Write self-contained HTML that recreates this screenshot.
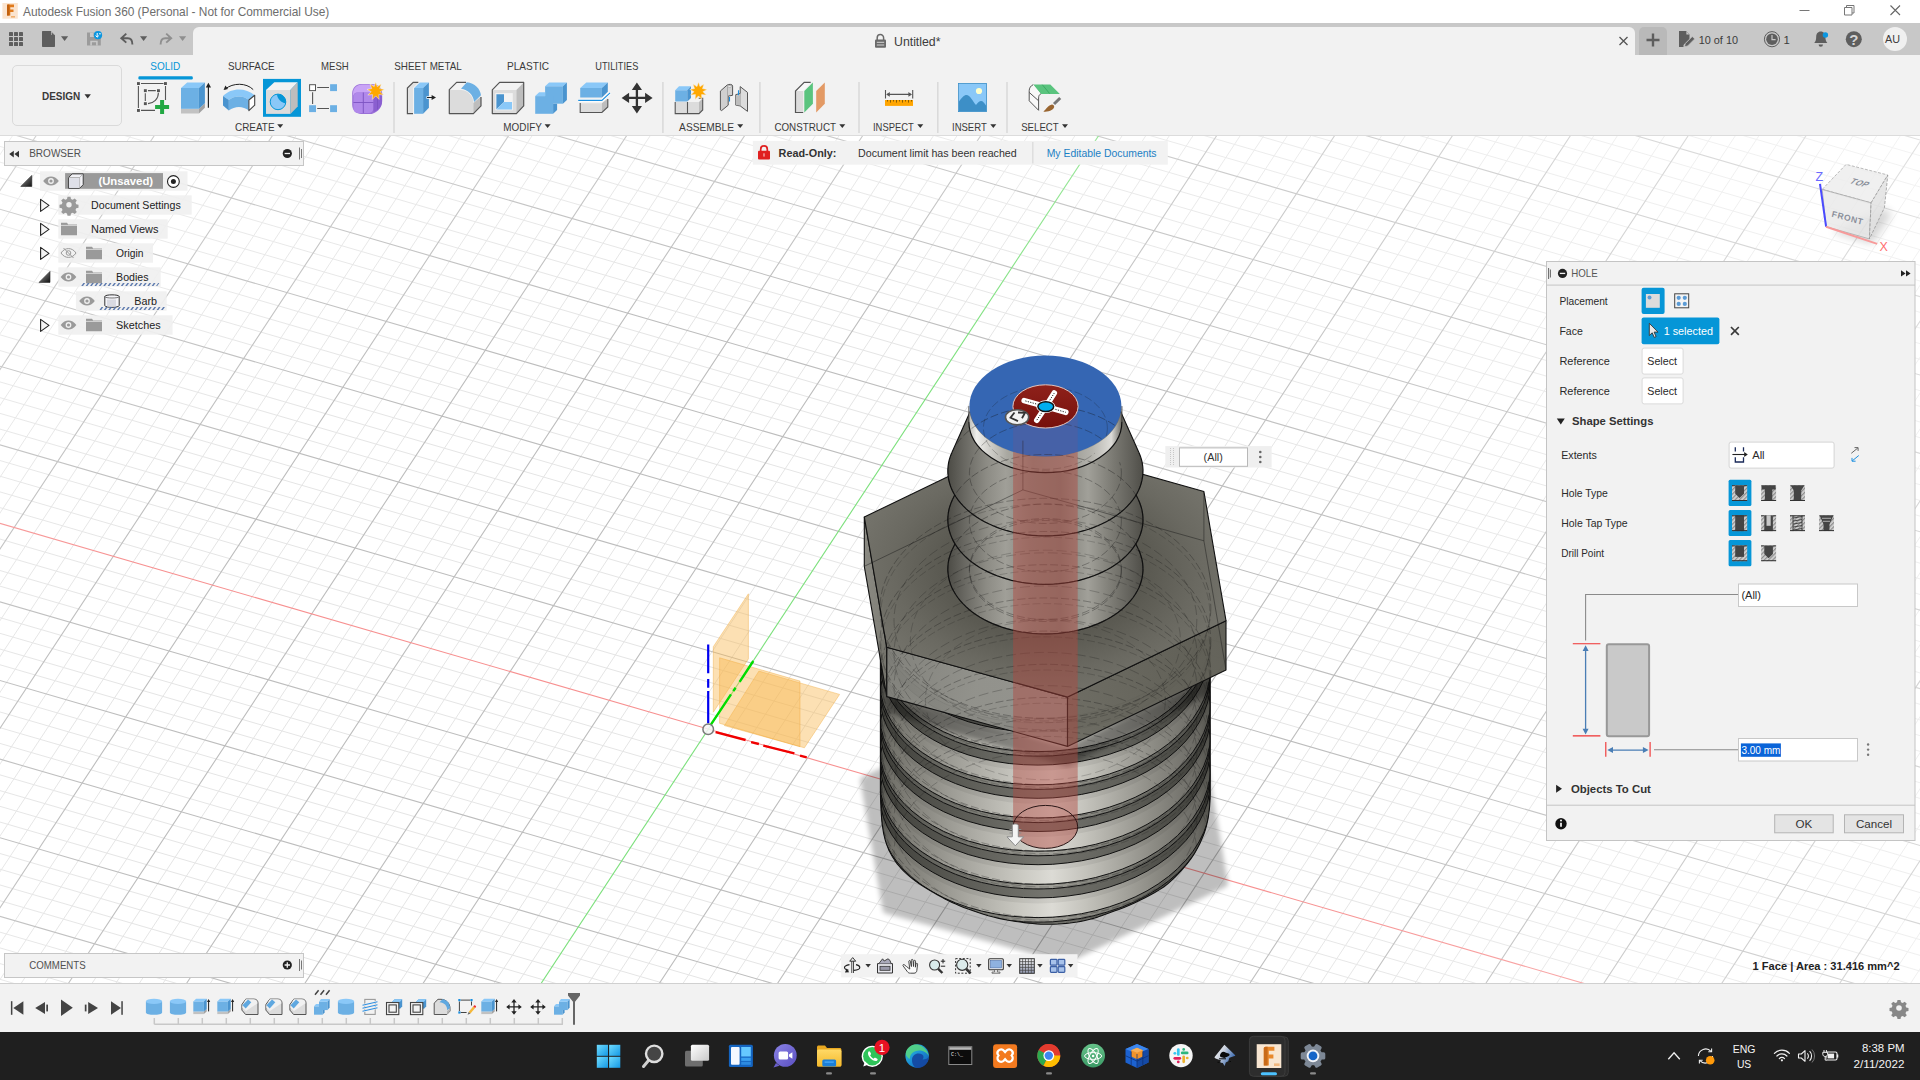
<!DOCTYPE html>
<html lang="en">
<head>
<meta charset="utf-8">
<title>Autodesk Fusion 360</title>
<style>
*{box-sizing:border-box;margin:0;padding:0}
html,body{width:1920px;height:1080px;overflow:hidden;background:#fff;font-family:"Liberation Sans",sans-serif;font-size:11px;color:#333}
.abs{position:absolute}
#titlebar{position:absolute;left:0;top:0;width:1920px;height:23px;background:#fff}
#titlebar .t{position:absolute;left:23px;top:5px;font-size:11.9px;color:#6d6d6d;white-space:nowrap;letter-spacing:-0.02px}
#tabbar{position:absolute;left:0;top:23px;width:1920px;height:32px;background:#c8c8c8}
#tab{position:absolute;left:193px;top:4px;width:1442px;height:28px;background:#f2f2f2;border-radius:6px 6px 0 0}
#toolbar{position:absolute;left:0;top:55px;width:1920px;height:81px;background:#f2f2f2;border-bottom:1px solid #dcdcdc}
#canvas{position:absolute;left:0;top:136px;width:1920px;height:847px;background:#fff;overflow:hidden}
#timeline{position:absolute;left:0;top:983px;width:1920px;height:49px;background:#f2f2f2;border-top:1px solid #d0d0d0}
#taskbar{position:absolute;left:0;top:1032px;width:1920px;height:48px;background:#1f1f1f}
.tl{position:absolute;white-space:nowrap}
svg{position:absolute;overflow:visible}
</style>
</head>
<body>
<div id="titlebar"><div class="t">Autodesk Fusion 360 (Personal - Not for Commercial Use)</div></div>
<div id="tabbar"><div id="tab"></div>
<div class="abs" style="left:1639px;top:4px;width:28px;height:28px;background:#b9b9b9;border-radius:5px 5px 0 0"></div>
<div class="abs" style="left:1883px;top:4px;width:24px;height:24px;border-radius:12px;background:#f0f0f0"></div>
</div>
<svg id="topsvg" width="1920" height="60" viewBox="0 0 1920 60" style="left:0;top:0">
<!-- app icon -->
<rect x="2.400" y="3" width="15.400" height="15.700" fill="#fbe4cf"/>
<path d="M7 5.600c0-.600.400-1 1-1h6v2.600h-3.700v2.400h3.200v2.500h-3.200v3.300h-3.300z" fill="#e07a1c"/>
<path d="M7 5.600c0-.600.400-1 1-1h1.400v10.800h-2.400z" fill="#c2610f"/>
<rect x="11" y="16" width="4" height="1.600" fill="#f0b070"/>
<!-- window controls -->
<path d="M1799.5 10.5h10" stroke="#777" stroke-width="1" fill="none"/>
<path d="M1844.5 7.5h7.5v7.5h-7.5zM1846.5 7.5v-2h7.5v7.5h-2" stroke="#777" stroke-width="1" fill="none" stroke-linejoin="round"/>
<path d="M1890.5 5.5l9.5 9.5M1900 5.5l-9.5 9.5" stroke="#666" stroke-width="1.1" fill="none"/>
<!-- QAT: grid -->
<g fill="#5e5e5e">
<rect x="9" y="32" width="4" height="4" rx=".6"/><rect x="14" y="32" width="4" height="4" rx=".6"/><rect x="19" y="32" width="4" height="4" rx=".6"/>
<rect x="9" y="37" width="4" height="4" rx=".6"/><rect x="14" y="37" width="4" height="4" rx=".6"/><rect x="19" y="37" width="4" height="4" rx=".6"/>
<rect x="9" y="42" width="4" height="4" rx=".6"/><rect x="14" y="42" width="4" height="4" rx=".6"/><rect x="19" y="42" width="4" height="4" rx=".6"/>
</g>
<!-- file -->
<path d="M42.7 31h8.2l4.1 4.2V46.2a.7.7 0 0 1-.7.7H42.7a.7.7 0 0 1-.7-.7V31.7a.7.7 0 0 1 .7-.7z" fill="#5e5e5e"/>
<path d="M51 31v4h4z" fill="#c8c8c8"/><path d="M51.6 32.3v3h3z" fill="#5e5e5e"/>
<path d="M61 36.2h7.2l-3.6 4.8z" fill="#5e5e5e"/>
<!-- save -->
<path d="M87 32.5h11.5l2.3 2.3v10.7H87z" fill="#9b9b9b"/>
<rect x="90" y="32.5" width="6.5" height="4.5" fill="#c8c8c8"/><rect x="93.5" y="33" width="2" height="3.4" fill="#9b9b9b"/>
<path d="M90.3 45.5v-4.8h7.4v4.8h-1.6v-3.2h-4.2v3.2z" fill="#c8c8c8"/>
<circle cx="98" cy="35.2" r="4.1" fill="#0b96e0"/>
<path d="M97.2 33v4M95.6 35.6l1.6 1.6 1.6-1.6M99 33.8h1.8" stroke="#fff" stroke-width="1" fill="none"/>
<!-- undo -->
<path d="M126.3 33.6l-5 4.6 5 4.4M121.8 38.2h6c3.2 0 4.6 2.6 4.6 6.4" stroke="#5e5e5e" stroke-width="1.9" fill="none" stroke-linejoin="miter"/>
<path d="M140 36.2h7.2l-3.6 4.8z" fill="#5e5e5e"/>
<!-- redo -->
<path d="M166.2 33.6l5 4.6-5 4.4M170.7 38.2h-5.5c-3.2 0-4.6 2.6-4.6 6.4" stroke="#8f8f8f" stroke-width="1.9" fill="none"/>
<path d="M179 36.2h7.2l-3.6 4.8z" fill="#8f8f8f"/>
<!-- lock + title -->
<path d="M877.2 40.2v-2.4a3.2 3.2 0 0 1 6.4 0v2.4" stroke="#6a6a6a" stroke-width="1.5" fill="none"/>
<rect x="875" y="39.6" width="11" height="8.2" rx="1" fill="#6a6a6a"/>
<path d="M876.8 42.3h7.4M876.8 45h7.4" stroke="#f2f2f2" stroke-width=".8"/>
<text x="894" y="45.6" font-size="12.3" fill="#3c3c3c">Untitled*</text>
<!-- tab close -->
<path d="M1619.5 37l8 8M1627.5 37l-8 8" stroke="#555" stroke-width="1.3" fill="none"/>
<!-- plus -->
<path d="M1653 33.5v13M1646.5 40h13" stroke="#5e5e5e" stroke-width="2.4" fill="none"/>
<!-- doc edit -->
<path d="M1679 31h7l3.5 3.5v4.5l-6 6V47h-4.5z" fill="#5e5e5e"/>
<path d="M1686.4 31.6v3h3z" fill="#c8c8c8"/>
<path d="M1692.3 36.5l2.4 2.4-7 7-3.2.9.8-3.3z" fill="#5e5e5e" stroke="#c8c8c8" stroke-width=".7"/>
<text x="1698.7" y="43.5" font-size="11.4" fill="#3c3c3c" textLength="39.3" lengthAdjust="spacingAndGlyphs">10 of 10</text>
<!-- clock -->
<circle cx="1772" cy="39.2" r="7.6" fill="none" stroke="#5e5e5e" stroke-width="1"/>
<circle cx="1772" cy="39.2" r="5.8" fill="#5e5e5e"/>
<path d="M1772 35v4.6h3.6" stroke="#c8c8c8" stroke-width="1.2" fill="none"/>
<text x="1783.4" y="43.5" font-size="11.4" fill="#3c3c3c">1</text>
<!-- bell -->
<path d="M1820.8 31.5c-3 0-4.6 2.4-4.6 5.2 0 3.4-.8 5-2 6.4h13.2c-1.2-1.4-2-3-2-6.4 0-2.8-1.6-5.2-4.6-5.2z" fill="#5e5e5e"/>
<path d="M1818.6 44.6a2.2 2.2 0 0 0 4.4 0z" fill="#5e5e5e"/>
<circle cx="1825.4" cy="35" r="2.7" fill="#0b96e0"/>
<!-- help -->
<circle cx="1853.8" cy="39.2" r="8" fill="#5e5e5e"/>
<text x="1853.8" y="44.6" font-size="15" font-weight="bold" fill="#d4d4d4" text-anchor="middle">?</text>
<text x="1892.6" y="43.2" font-size="10.8" fill="#3c3c3c" text-anchor="middle">AU</text>
</svg>
<div id="toolbar">
<div class="abs" style="left:12px;top:10px;width:110px;height:61px;border:1px solid #dadada;border-radius:5px"></div>
</div>
<svg id="tbsvg" width="1920" height="140" viewBox="0 0 1920 140" style="left:0;top:0" font-family="Liberation Sans, sans-serif">
<g font-size="10.6" fill="#3a3a3a">
<text x="42" y="100" font-weight="bold" font-size="10.4" textLength="38.3" lengthAdjust="spacingAndGlyphs">DESIGN</text>
<path d="M84.5 94.2h6.4l-3.2 4.2z" fill="#333"/>
<text x="150.3" y="70" fill="#0696d7" textLength="30" lengthAdjust="spacingAndGlyphs">SOLID</text>
<text x="228" y="70" textLength="46.7" lengthAdjust="spacingAndGlyphs">SURFACE</text>
<text x="321" y="70" textLength="27.7" lengthAdjust="spacingAndGlyphs">MESH</text>
<text x="394.3" y="70" textLength="67.4" lengthAdjust="spacingAndGlyphs">SHEET METAL</text>
<text x="507" y="70" textLength="42" lengthAdjust="spacingAndGlyphs">PLASTIC</text>
<text x="595.3" y="70" textLength="43" lengthAdjust="spacingAndGlyphs">UTILITIES</text>
<text x="235" y="130.7" textLength="39.5" lengthAdjust="spacingAndGlyphs">CREATE</text>
<text x="503.3" y="130.7" textLength="38.5" lengthAdjust="spacingAndGlyphs">MODIFY</text>
<text x="679.1" y="130.7" textLength="55" lengthAdjust="spacingAndGlyphs">ASSEMBLE</text>
<text x="774.4" y="130.7" textLength="61.6" lengthAdjust="spacingAndGlyphs">CONSTRUCT</text>
<text x="873" y="130.7" textLength="40.8" lengthAdjust="spacingAndGlyphs">INSPECT</text>
<text x="952" y="130.7" textLength="34.7" lengthAdjust="spacingAndGlyphs">INSERT</text>
<text x="1021.2" y="130.7" textLength="37.5" lengthAdjust="spacingAndGlyphs">SELECT</text>
</g>
<g fill="#333">
<path d="M277.2 124.2h6l-3 3.8z"/><path d="M544.6 124.2h6l-3 3.8z"/><path d="M737.2 124.2h6l-3 3.8z"/><path d="M839.3 124.2h6l-3 3.8z"/><path d="M917.3 124.2h6l-3 3.8z"/><path d="M990.3 124.2h6l-3 3.8z"/><path d="M1062 124.2h6l-3 3.8z"/>
</g>
<rect x="138.4" y="76.2" width="54.4" height="3.2" rx="1.2" fill="#0696d7"/>
<g stroke="#dadada" stroke-width="1.6">
<path d="M394 82v51M662.9 82v51M759.9 82v51M859 82v51M937.8 82v51M1007 82v51"/>
</g>
<!-- sketch -->
<g stroke="#555" stroke-width="1.1" fill="none">
<path d="M141 83.5h22.5M138.4 86v22M165.5 86v14M141 110.4h14"/>
<path d="M148 90.6h7.8M145.3 93.3v7.6M158.4 92.8c0 6-4.6 10.4-10.4 10.8"/>
</g>
<g fill="#555"><rect x="137" y="82.1" width="2.9" height="2.9"/><rect x="164" y="82.1" width="2.9" height="2.9"/><rect x="137" y="109" width="2.9" height="2.9"/>
<rect x="143.9" y="89.2" width="2.9" height="2.9"/><rect x="157" y="89.2" width="2.9" height="2.9"/><rect x="143.9" y="102.2" width="2.9" height="2.9"/></g>
<path d="M160.1 100h4v5h5v4h-5v5h-4v-5h-5v-4h5z" fill="#22a843"/>
<!-- extrude -->
<path d="M181 108.8h17.9v4.7H181z" fill="#c2c2c2"/><path d="M198.9 108.8l6-5.5v4.5l-6 5.7z" fill="#a2a2a2"/>
<path d="M181 88h17.9v20.8H181z" fill="#6cb0e4"/><path d="M181 88l6.2-5.6h17.7l-6 5.6z" fill="#8ac8f8"/><path d="M198.9 88l6-5.6v20.9l-6 5.5z" fill="#4a94cf"/>
<path d="M208.4 107.7V85" stroke="#222" stroke-width="1.2"/><path d="M208.4 82.8l2.6 4.6h-5.2z" fill="#222"/>
<!-- revolve -->
<path d="M253.2 89.6c-7-7-20-7-28 -.6" stroke="#222" stroke-width="1" fill="none"/><path d="M223.6 90l1.8-4.6 2.6 3.6z" fill="#222"/>
<path d="M223 96c8.500-8.500 22.500-8.500 31.700-.7l-5.800 4.700c-6-4.600-14-4.600-20.100 0z" fill="#8ac8f8"/>
<path d="M228.800 100c6.100-4.600 14.100-4.600 20.100 0v10.600c-6-4.800-14-4.800-20.100 0z" fill="#6cb0e4"/>
<path d="M223 96l5.800 4v10.600l-5.800-5.100z" fill="#4a94cf"/>
<path d="M248.900 100l5.800-4.700v9.900l-5.800 5.400z" fill="#fff" stroke="#444" stroke-width="1.1" stroke-linejoin="round"/>
<!-- hole (selected) -->
<rect x="263" y="78.900" width="38" height="37.900" fill="#0696d7"/>
<path d="M266 89.900h24.400v24H266z" fill="#dcdcdc"/><path d="M266 89.900l8.300-7.700h23.400l-7.300 7.700z" fill="#f3f3f3"/><path d="M290.400 89.900l7.300-7.700v24.400l-7.300 7.300z" fill="#bdbdbd"/>
<circle cx="278" cy="101.900" r="7.800" fill="#8ac8f8" stroke="#0696d7" stroke-width="1"/>
<path d="M277 94.200a7.800 7.800 0 0 1 8.700 9c-4.500-.6-8.400-4.200-8.700-9z" fill="#0696d7"/>
<!-- pattern -->
<path d="M317.200 87.500h11.800M317.200 108.500h11.800M312.600 92.300v11.600" stroke="#555" stroke-width="1.100"/>
<rect x="309.600" y="84.700" width="5.900" height="5.900" fill="#fff" stroke="#555" stroke-width="1"/>
<rect x="330.100" y="84.200" width="6.900" height="6.900" fill="#6cb0e4"/><rect x="309.100" y="105.200" width="6.900" height="6.900" fill="#6cb0e4"/><rect x="330.100" y="105.200" width="6.900" height="6.900" fill="#6cb0e4"/>
<!-- form -->
<path d="M361 83.900h11c6 0 10.200 4 10.200 9.500v7.500c0 7-6 13.200-13 13.200h-8c-5 0-9-4-9-9v-12c0-5 4-9.200 8.800-9.200z" fill="#9a70d8"/>
<path d="M353 93.500c0-5.500 4-9 9-9h10c3 0 5 1 6.500 2.500l-5 5.500h-16c-2.500 0-4.500 2-4.500 4.500z" fill="#c9a4f6"/>
<rect x="353.400" y="92.500" width="20" height="20.600" rx="4.500" fill="#b088ea"/>
<path d="M373.500 97l8.400-5v10c0 4-3 8-8.400 10z" fill="#8a5fd0"/>
<path d="M363.300 92.500v20.600M353.400 102.500h20M377.500 95v14.500" stroke="#7c52c2" stroke-width=".9" fill="none"/>
<path d="M375.700 82l1.500 4.600 4.100-2.500-1.600 4.500 4.700.8-4.200 2.300 3.400 3.400-4.800-.5.300 4.800-3.400-3.500-3.400 3.500.3-4.800-4.800.5 3.400-3.400-4.200-2.300 4.700-.8-1.600-4.500 4.100 2.500z" fill="#ffa800" stroke="#f3f3f3" stroke-width=".5"/>
<!-- press pull -->
<path d="M407.400 113.600V88l5.800-5.600h5.100l-5.400 5.600v25.600z" fill="#e2e2e2"/>
<path d="M413 113.600h-5.600V88l5.800-5.600h5.100" fill="none" stroke="#555" stroke-width="1.200"/>
<path d="M414.100 88h9v25.800h-9z" fill="#6cb0e4"/><path d="M414.100 88l5.700-5.600h9.100l-5.800 5.600z" fill="#8ac8f8"/><path d="M423.100 88l5.800-5.600v25.300l-5.800 6.100z" fill="#4a94cf"/>
<path d="M426.500 97.500h6" stroke="#fff" stroke-width="2.600"/><path d="M427 97.500h6" stroke="#222" stroke-width="1.100"/><path d="M431.600 95.100l4.400 2.400-4.400 2.400z" fill="#222"/>
<!-- fillet -->
<path d="M449.300 89.700l7.300-7.300h10.200l-5.800 6.400z" fill="#f3f3f3"/>
<path d="M449.300 89.900h11.300c7 0 12.800 6 12.800 13.100v10.600h-24.100z" fill="#dcdcdc"/>
<path d="M466.800 82.200c8 .8 13.600 6.600 14.200 13.100l-6.900 6.600c-.8-7-6-12.300-13.100-13.100z" fill="#6cb0e4"/>
<path d="M473.400 103l7.600-6.600v9.500l-7.600 7.700z" fill="#bdbdbd"/>
<path d="M466 82.400h-9.400l-7.300 7.300v23.900h24.100l7.600-7.700v-9" fill="none" stroke="#555" stroke-width="1.200" stroke-linejoin="round"/>
<!-- shell -->
<path d="M492.300 89.900h24.100v23.700h-24.100z" fill="#dcdcdc"/><path d="M492.300 89.900l7.300-7.500h24.100l-7.300 7.500z" fill="#f3f3f3"/><path d="M516.400 89.900l7.300-7.500v23.500l-7.300 7.700z" fill="#bdbdbd"/>
<path d="M492.300 113.600V89.900l7.300-7.500h24.100v23.500l-7.300 7.700z" fill="none" stroke="#555" stroke-width="1.200" stroke-linejoin="round"/>
<rect x="495.300" y="93.100" width="17.500" height="17.200" fill="#f3f3f3"/>
<path d="M496.400 94.200h7.600v7.700l-7.600 7.300z" fill="#4a94cf"/><path d="M496.400 109.500l7.600-7.600h8v7.600z" fill="#8ac8f8"/>
<!-- combine -->
<path d="M545.100 86.200h17.800v17.500h-17.800z" fill="#6cb0e4"/><path d="M545.100 86.200l4-3.800h17.800l-4 3.800z" fill="#8ac8f8"/><path d="M562.900 86.200l4-3.800v17.700l-4 3.600z" fill="#4a94cf"/>
<path d="M535.200 96.100h17.900v17.700h-17.900z" fill="#6cb0e4"/><path d="M535.200 96.100l4-3.900h5.900v3.900z" fill="#8ac8f8"/><path d="M553.100 103.700h4v6.200l-4 3.900z" fill="#4a94cf"/>
<!-- split body -->
<path d="M580.200 103.300h21.700v9.200h-21.700z" fill="#dcdcdc"/><path d="M601.900 103.300l5.900-4.700v8.400l-5.900 5.500z" fill="#bdbdbd"/>
<path d="M580.200 103v9.500h21.700l5.900-5.500v-8" fill="none" stroke="#555" stroke-width="1.100"/>
<path d="M580.200 88h21.700v9.500h-21.700z" fill="#6cb0e4"/><path d="M580.200 88l6.100-5.600h21.500l-5.900 5.600z" fill="#8ac8f8"/><path d="M601.900 88l5.900-5.600v9.300l-5.900 5.800z" fill="#4a94cf"/>
<path d="M578.200 100.400h23.700l8.100-7.500" fill="none" stroke="#fff" stroke-width="2.800"/><path d="M578.200 100.400h23.700l8.100-7.500" fill="none" stroke="#1b8fe0" stroke-width="1.100"/>
<!-- move -->
<path d="M636.900 88v20M627 97.900h20" stroke="#333" stroke-width="2.300"/>
<path d="M636.900 82.400l5.100 7.500h-10.200zM636.900 113.600l5.100-7.500h-10.200zM621.600 97.900l7.500-5.100v10.200zM652.600 97.900l-7.500-5.100v10.200z" fill="#333"/>
<!-- new component -->
<path d="M675.200 101.900h12.100v11.700h-12.100zM687.700 101.900h11.300v11.700h-11.300z" fill="#dcdcdc"/><path d="M687.700 101.900l3.700-3.700h11.300l-3.700 3.700z" fill="#f3f3f3"/><path d="M699 101.900l3.700-3.700v11.700l-3.700 3.700z" fill="#bdbdbd"/>
<path d="M675.200 101.900v11.700h23.800l3.700-3.700v-11.700h-4M687.500 101.900v11.700" fill="none" stroke="#555" stroke-width="1.100"/>
<path d="M675.200 90.200h12.100v11.300h-12.100z" fill="#6cb0e4"/><path d="M675.200 90.200l3.800-4h12l-3.700 4z" fill="#8ac8f8"/><path d="M687.300 90.200l3.700-4v11.700l-3.700 3.600z" fill="#4a94cf"/>
<path d="M698.500 82l1.500 4.600 4.100-2.500-1.600 4.500 4.700.8-4.200 2.300 3.400 3.400-4.800-.5.300 4.800-3.400-3.500-3.400 3.500.3-4.800-4.800.5 3.400-3.400-4.200-2.300 4.700-.8-1.600-4.500 4.100 2.500z" fill="#ffa800" stroke="#f3f3f3" stroke-width=".5"/>
<!-- joint -->
<path d="M720.400 91l6.700-5.900c1.800-1.200 5.500-1 5.500 1v9.200l-4.400.8v9.100l-6.600 5.400-1.200-.7z" fill="#d0d0d0" stroke="#555" stroke-width="1" stroke-linejoin="round"/>
<path d="M727.500 86.500v9.600" stroke="#aaa" stroke-width="1"/><ellipse cx="729.700" cy="86.400" rx="2" ry=".9" fill="#f3f3f3" stroke="#888" stroke-width=".5"/>
<path d="M740.200 86.600l7.300 5.800v19l-7.300-5.500-4.400-.7v-10.600l4.400-1.100z" fill="#dcdcdc" stroke="#555" stroke-width="1" stroke-linejoin="round"/>
<path d="M740.200 93.500v12.400" stroke="#999" stroke-width=".8"/><path d="M736 95.500h4.200v9.800H736z" fill="#bdbdbd"/>
<path d="M729.500 97.100v4.400M738.500 90.200v5.100" stroke="#1b8fe0" stroke-width="1.100"/>
<!-- construct -->
<path d="M795.500 91h7.700v21.500h-7.700z" fill="#dcdcdc"/><path d="M795.500 91l8.700-8.600h6.500l-7.500 8.600z" fill="#f8f8f8"/>
<path d="M803.200 112.500h-7.700V91l8.700-8.600h6.500" fill="none" stroke="#555" stroke-width="1.200"/>
<path d="M804.300 91l8.600-8.600v21.300l-8.600 8.800z" fill="#5ac47e"/><path d="M816.200 91l8.600-8.600v21.300l-8.600 8.800z" fill="#e39a65"/>
<!-- inspect -->
<path d="M885.500 89.900v8.700M912.700 89.900v8.700M887 94.400h24" stroke="#555" stroke-width="1.100" fill="none"/><path d="M886.200 94.400l3.600-2.400v4.800zM912 94.400l-3.600-2.400v4.800z" fill="#555"/>
<rect x="885" y="100" width="28" height="5.900" fill="#ffa500"/><path d="M887.500 100v1.500M890.500 100v2.600M893.500 100v1.500M896.500 100v2.600M899.500 100v1.500M902.500 100v2.600M905.500 100v1.500M908.500 100v2.600M911.500 100v1.500" stroke="#6b4a00" stroke-width=".8"/>
<!-- insert -->
<rect x="958.600" y="83.400" width="28" height="28.200" fill="#8ac8f8" stroke="#3d8fc7" stroke-width=".8"/>
<path d="M959 101.500c3-4 5-6.500 7.500-6.500 3.500 0 6 6 9.500 10 2-2.500 3.500-4 5-4 2 0 3.500 2 5.300 5v5.300H959z" fill="#3d8fc7"/><circle cx="979" cy="91" r="3.100" fill="#ffffcc"/>
<!-- select -->
<path d="M1033.200 84.400h17.100l9.500 9.500h-19z" fill="#5ac47e"/><path d="M1042.300 84.700l7.300 8.800" stroke="#3aa562" stroke-width=".9"/>
<path d="M1033.200 84.700c-2.500 1-4 3.500-4 6v10.100l9.400 9.500v-12.400c0-2 .8-3.400 2.200-4" fill="#f8f8f8" stroke="#555" stroke-width="1" stroke-linejoin="round"/><path d="M1029.200 92.400l9.400 8.400" stroke="#555" stroke-width="1"/>
<path d="M1054 104l6.200-6" stroke="#777" stroke-width="3"/><path d="M1043.400 111.800c3-3 5-6.500 8.500-7.200 1.500.2 2.300 1.200 2.300 2.500-1 3.500-6 4.700-10.800 4.700z" fill="#996530"/>

</svg>
<div id="canvas">
<svg id="cv" width="1920" height="847" viewBox="0 136 1920 847" style="left:0;top:0" font-family="Liberation Sans, sans-serif">
<g id="grid">
<path d="M-667.8 879.9L245.3 -503.5M-647.9 885.7L265.1 -497.7M-628.1 891.4L284.9 -492.0M-608.2 897.2L304.7 -486.2M-568.5 908.7L344.4 -474.7M-548.6 914.5L364.2 -469.0M-528.8 920.3L384.0 -463.2M-508.9 926.0L403.8 -457.4M-469.2 937.6L443.4 -445.9M-449.3 943.3L463.2 -440.2M-429.4 949.1L483.0 -434.4M-409.6 954.9L502.8 -428.6M-369.9 966.4L542.4 -417.1M-350.0 972.2L562.2 -411.4M-330.1 977.9L582.0 -405.6M-310.3 983.7L601.8 -399.9M-270.6 995.2L641.4 -388.3M-250.7 1001.0L661.2 -382.6M-230.8 1006.8L681.0 -376.8M-211.0 1012.5L700.8 -371.1M-171.3 1024.0L740.4 -359.5M-151.4 1029.8L760.2 -353.8M-131.5 1035.6L780.0 -348.0M-111.7 1041.3L799.8 -342.3M-72.0 1052.9L839.4 -330.8M-52.1 1058.6L859.2 -325.0M-32.2 1064.4L879.0 -319.3M-12.4 1070.2L898.8 -313.5M27.3 1081.7L938.4 -302.0M47.2 1087.5L958.2 -296.2M67.0 1093.2L978.0 -290.5M86.9 1099.0L997.8 -284.7M126.6 1110.5L1037.4 -273.2M146.5 1116.3L1057.2 -267.4M166.3 1122.0L1077.0 -261.7M186.2 1127.8L1096.8 -255.9M225.9 1139.3L1136.4 -244.4M245.7 1145.1L1156.2 -238.7M265.6 1150.8L1176.0 -232.9M285.4 1156.6L1195.8 -227.2M325.1 1168.1L1235.4 -215.6M345.0 1173.9L1255.2 -209.9M364.8 1179.7L1274.9 -204.1M384.7 1185.4L1294.7 -198.4M424.4 1196.9L1334.3 -186.9M444.3 1202.7L1354.1 -181.1M464.1 1208.5L1373.9 -175.4M484.0 1214.2L1393.7 -169.6M523.7 1225.8L1433.3 -158.1M543.5 1231.5L1453.1 -152.3M563.4 1237.3L1472.9 -146.6M583.2 1243.0L1492.7 -140.8M622.9 1254.6L1532.3 -129.3M642.8 1260.3L1552.0 -123.6M662.6 1266.1L1571.8 -117.8M682.5 1271.9L1591.6 -112.1M722.1 1283.4L1631.2 -100.5M742.0 1289.1L1651.0 -94.8M761.8 1294.9L1670.8 -89.0M781.7 1300.7L1690.6 -83.3M821.4 1312.2L1730.1 -71.8M841.2 1317.9L1749.9 -66.0M861.1 1323.7L1769.7 -60.3M880.9 1329.5L1789.5 -54.5M920.6 1341.0L1829.1 -43.0M940.5 1346.7L1848.9 -37.3M960.3 1352.5L1868.7 -31.5M980.2 1358.3L1888.5 -25.7M1019.8 1369.8L1928.0 -14.2M1039.7 1375.5L1947.8 -8.5M1059.5 1381.3L1967.6 -2.7M1079.4 1387.1L1987.4 3.0M1119.1 1398.6L2027.0 14.5M1138.9 1404.3L2046.7 20.3M1158.8 1410.1L2066.5 26.0M1178.6 1415.9L2086.3 31.8M1218.3 1427.4L2125.9 43.3M1238.1 1433.1L2145.7 49.0M1258.0 1438.9L2165.4 54.8M1277.8 1444.7L2185.2 60.5M1317.5 1456.2L2224.8 72.1M1337.3 1461.9L2244.6 77.8M1357.2 1467.7L2264.4 83.6M1377.0 1473.5L2284.1 89.3M1416.7 1485.0L2323.7 100.8M1436.5 1490.7L2343.5 106.6M1456.4 1496.5L2363.3 112.3M1476.2 1502.3L2383.0 118.1M1515.9 1513.8L2422.6 129.6M1535.7 1519.5L2442.4 135.3M1555.6 1525.3L2462.2 141.1M1575.4 1531.0L2482.0 146.8M1615.1 1542.6L2521.5 158.3M1634.9 1548.3L2541.3 164.1M1654.7 1554.1L2561.1 169.8M1674.6 1559.8L2580.8 175.6M-678.9 860.9L1703.1 1552.4M-670.2 847.7L1711.7 1539.2M-661.5 834.5L1720.4 1525.9M-652.8 821.3L1729.0 1512.7M-635.3 794.9L1746.3 1486.3M-626.6 781.7L1755.0 1473.1M-617.9 768.5L1763.6 1459.9M-609.2 755.3L1772.3 1446.7M-591.8 728.9L1789.6 1420.2M-583.1 715.7L1798.2 1407.0M-574.3 702.5L1806.9 1393.8M-565.6 689.3L1815.5 1380.6M-548.2 662.9L1832.8 1354.2M-539.5 649.7L1841.5 1341.0M-530.8 636.5L1850.1 1327.8M-522.1 623.3L1858.8 1314.6M-504.6 596.9L1876.0 1288.2M-495.9 583.7L1884.7 1274.9M-487.2 570.5L1893.3 1261.7M-478.5 557.3L1902.0 1248.5M-461.1 530.9L1919.3 1222.1M-452.4 517.7L1927.9 1208.9M-443.7 504.5L1936.5 1195.7M-435.0 491.3L1945.2 1182.5M-417.5 464.9L1962.5 1156.1M-408.8 451.8L1971.1 1142.9M-400.1 438.6L1979.7 1129.7M-391.4 425.4L1988.4 1116.5M-374.0 399.0L2005.7 1090.2M-365.3 385.8L2014.3 1077.0M-356.6 372.6L2022.9 1063.8M-347.9 359.5L2031.6 1050.6M-330.5 333.1L2048.8 1024.2M-321.8 319.9L2057.5 1011.0M-313.1 306.7L2066.1 997.8M-304.4 293.5L2074.8 984.6M-287.0 267.2L2092.0 958.2M-278.3 254.0L2100.7 945.1M-269.6 240.8L2109.3 931.9M-260.9 227.6L2117.9 918.7M-243.5 201.3L2135.2 892.3M-234.8 188.1L2143.8 879.1M-226.1 174.9L2152.4 865.9M-217.4 161.8L2161.1 852.8M-200.0 135.4L2178.3 826.4M-191.3 122.2L2187.0 813.2M-182.6 109.1L2195.6 800.0M-173.9 95.9L2204.2 786.9M-156.6 69.6L2221.5 760.5M-147.9 56.4L2230.1 747.3M-139.2 43.2L2238.7 734.2M-130.5 30.1L2247.3 721.0M-113.1 3.7L2264.6 694.6M-104.4 -9.4L2273.2 681.5M-95.7 -22.6L2281.8 668.3M-87.0 -35.8L2290.5 655.1M-69.6 -62.1L2307.7 628.8M-61.0 -75.3L2316.3 615.6M-52.3 -88.4L2325.0 602.4M-43.6 -101.6L2333.6 589.3M-26.2 -127.9L2350.8 562.9M-17.5 -141.1L2359.4 549.7M-8.8 -154.2L2368.1 536.6M-0.1 -167.4L2376.7 523.4M17.2 -193.7L2393.9 497.1M25.9 -206.9L2402.5 483.9M34.6 -220.0L2411.2 470.8M43.3 -233.2L2419.8 457.6M60.6 -259.5L2437.0 431.3M69.3 -272.6L2445.6 418.1M78.0 -285.8L2454.2 404.9M86.7 -298.9L2462.8 391.8M104.0 -325.2L2480.1 365.5M112.7 -338.4L2488.7 352.3M121.4 -351.5L2497.3 339.2M130.1 -364.7L2505.9 326.0M147.4 -391.0L2523.1 299.7M156.1 -404.1L2531.8 286.5M164.8 -417.3L2540.4 273.4M173.5 -430.4L2549.0 260.2M190.8 -456.7L2566.2 233.9M199.5 -469.8L2574.8 220.8M208.2 -483.0L2583.4 207.6M216.9 -496.1L2592.0 194.5" stroke="#e5e5e5" stroke-width="1" fill="none"/>
<path d="M-687.7 874.1L225.5 -509.3M-588.3 903.0L324.6 -480.5M-489.0 931.8L423.6 -451.7M-389.7 960.6L522.6 -422.9M-290.4 989.5L621.6 -394.1M-191.1 1018.3L720.6 -365.3M-91.8 1047.1L819.6 -336.5M7.5 1075.9L918.6 -307.7M106.7 1104.7L1017.6 -279.0M206.0 1133.6L1116.6 -250.2M305.3 1162.4L1215.6 -221.4M503.8 1220.0L1413.5 -163.8M603.1 1248.8L1512.5 -135.1M702.3 1277.6L1611.4 -106.3M801.5 1306.4L1710.4 -77.5M900.8 1335.2L1809.3 -48.8M1000.0 1364.0L1908.2 -20.0M1099.2 1392.8L2007.2 8.8M1198.4 1421.6L2106.1 37.5M1297.6 1450.4L2205.0 66.3M1396.8 1479.2L2303.9 95.1M1496.0 1508.0L2402.8 123.8M1595.2 1536.8L2501.7 152.6M1694.4 1565.6L2600.6 181.3M-687.7 874.1L1694.4 1565.6M-644.1 808.1L1737.7 1499.5M-600.5 742.1L1780.9 1433.4M-556.9 676.1L1824.2 1367.4M-513.3 610.1L1867.4 1301.4M-469.8 544.1L1910.6 1235.3M-426.3 478.1L1953.8 1169.3M-339.2 346.3L2040.2 1037.4M-295.7 280.4L2083.4 971.4M-252.2 214.5L2126.5 905.5M-208.7 148.6L2169.7 839.6M-165.2 82.7L2212.8 773.7M-121.8 16.9L2256.0 707.8M-78.3 -48.9L2299.1 641.9M-34.9 -114.8L2342.2 576.1M8.5 -180.5L2385.3 510.2M52.0 -246.3L2428.4 444.4M95.4 -312.1L2471.5 378.6M138.8 -377.8L2514.5 312.8M182.1 -443.6L2557.6 247.1M225.5 -509.3L2600.6 181.3" stroke="#bdbdbd" stroke-width="1.1" fill="none"/>
<path d="M-382.7 412.2L1997.0 1103.4" stroke="#f79090" stroke-width="1.1" fill="none"/>
<path d="M404.5 1191.2L1314.5 -192.6" stroke="#7be07b" stroke-width="1.1" fill="none"/>
<defs><radialGradient id="gFade" cx="707" cy="729" r="1500" gradientUnits="userSpaceOnUse" gradientTransform="translate(0,244.2) scale(1,.665)"><stop offset="0" stop-color="#fff" stop-opacity="0"/><stop offset=".4" stop-color="#fff" stop-opacity="0"/><stop offset="1" stop-color="#fff" stop-opacity=".55"/></radialGradient></defs><rect x="0" y="136" width="1920" height="847" fill="url(#gFade)"/>
</g>
<defs><linearGradient id="gThread" x1="880" x2="1211" y1="0" y2="0" gradientUnits="userSpaceOnUse">
<stop offset="0" stop-color="#55554f"/><stop offset=".04" stop-color="#74736c"/><stop offset=".2" stop-color="#9a9992"/><stop offset=".42" stop-color="#c9c8c1"/><stop offset=".52" stop-color="#dcdbd5"/><stop offset=".62" stop-color="#c4c3bc"/><stop offset=".82" stop-color="#8e8d86"/><stop offset=".96" stop-color="#6a6963"/><stop offset="1" stop-color="#4e4e48"/></linearGradient><linearGradient id="gDark" x1="880" x2="1211" y1="0" y2="0" gradientUnits="userSpaceOnUse">
<stop offset="0" stop-color="#3e3e39"/><stop offset=".25" stop-color="#5c5c56"/><stop offset=".5" stop-color="#74746e"/><stop offset=".75" stop-color="#5e5e58"/><stop offset="1" stop-color="#3c3c37"/></linearGradient><linearGradient id="gCrest" x1="880" x2="1211" y1="0" y2="0" gradientUnits="userSpaceOnUse">
<stop offset="0" stop-color="#4a4a45"/><stop offset=".3" stop-color="#7c7c75"/><stop offset=".5" stop-color="#a3a29b"/><stop offset=".7" stop-color="#7e7e77"/><stop offset="1" stop-color="#484843"/></linearGradient><linearGradient id="gBarb" x1="947" x2="1143" y1="0" y2="0" gradientUnits="userSpaceOnUse">
<stop offset="0" stop-color="#4b4a44"/><stop offset=".08" stop-color="#66655f"/><stop offset=".2" stop-color="#8c8b84"/><stop offset=".3" stop-color="#a09f98"/><stop offset=".42" stop-color="#8a8982"/><stop offset=".58" stop-color="#807f78"/><stop offset=".72" stop-color="#a1a099"/><stop offset=".85" stop-color="#7a7972"/><stop offset=".95" stop-color="#5e5d57"/><stop offset="1" stop-color="#4f4e48"/></linearGradient><filter id="fBlur" x="-20%" y="-20%" width="140%" height="140%"><feGaussianBlur stdDeviation="5"/></filter><filter id="fBlurS" x="-20%" y="-20%" width="140%" height="140%"><feGaussianBlur stdDeviation="2.6"/></filter><filter id="fBlur2" x="-20%" y="-20%" width="140%" height="140%"><feGaussianBlur stdDeviation="9"/></filter><linearGradient id="gHexL" x1="864" x2="887" y1="0" y2="0" gradientUnits="userSpaceOnUse"><stop offset="0" stop-color="#85847c"/><stop offset="1" stop-color="#77766e"/></linearGradient><linearGradient id="gHexFL" x1="887" x2="1067" y1="650" y2="720" gradientUnits="userSpaceOnUse"><stop offset="0" stop-color="#83837d"/><stop offset=".5" stop-color="#8f8f89"/><stop offset="1" stop-color="#8a8a85"/></linearGradient><linearGradient id="gHexFR" x1="1067" x2="1226" y1="720" y2="650" gradientUnits="userSpaceOnUse"><stop offset="0" stop-color="#6b6a61"/><stop offset="1" stop-color="#5f5e55"/></linearGradient><radialGradient id="gHexT" cx="1045" cy="569" r="190" gradientUnits="userSpaceOnUse" gradientTransform="translate(0,190.6) scale(1,.665)"><stop offset="0" stop-color="#4b4a43"/><stop offset=".55" stop-color="#5b5a52"/><stop offset=".8" stop-color="#6a6961"/><stop offset="1" stop-color="#73726a"/></radialGradient><linearGradient id="gCyl" x1="969" x2="1122" y1="0" y2="0" gradientUnits="userSpaceOnUse"><stop offset="0" stop-color="#bdbcb6"/><stop offset=".05" stop-color="#efefec"/><stop offset=".13" stop-color="#d2d1cc"/><stop offset=".25" stop-color="#a9a8a1"/><stop offset=".42" stop-color="#8e8d86"/><stop offset=".62" stop-color="#96958e"/><stop offset=".8" stop-color="#b4b3ad"/><stop offset=".93" stop-color="#dddcd8"/><stop offset="1" stop-color="#6a6962"/></linearGradient></defs>
<g filter="url(#fBlurS)" opacity=".25"><path d="M863.3 780L1021.9 703.6L1202.9 754.5L1225 883.7L1066.5 960.1L885.8 910.3Z" fill="#000" stroke="#000" stroke-width="6" stroke-linejoin="round"/></g>
<clipPath id="cBody"><path d="M880.4 640L880.4 790L880.4 791.2L880.4 792.7L880.5 794.6L880.5 796.8L880.6 799.3L880.7 802L880.9 805.2L881 808.9L881.2 812.8L881.5 816.9L881.8 820.8L882.2 824.4L882.7 827.7L883.2 830.8L883.7 833.8L884.4 836.7L885.1 839.5L885.9 842.2L886.8 844.9L887.8 847.4L888.8 849.9L890 852.3L891.2 854.6L892.6 857L894.1 859.3L895.6 861.6L897.2 863.8L899 866L900.9 868.2L903 870.4L905.3 872.6L907.8 874.8L910.4 877.1L913.2 879.3L916.2 881.5L919.3 883.7L922.7 886L926.3 888.2L930 890.5L933.9 892.8L937.7 895L941.5 897L945.1 898.9L948.6 900.7L952.1 902.4L955.8 904.1L959.6 905.7L963.7 907.4L968.2 909.1L973.1 910.8L978.2 912.5L983.4 914.2L988.4 915.7L993.3 917L997.9 918.1L1002.5 919.1L1006.9 920L1011.3 920.7L1015.7 921.4L1020 922L1024.3 922.6L1028.5 923.1L1032.6 923.5L1036.7 923.9L1040.9 924.2L1045 924.3L1049.2 924.3L1053.5 924.2L1057.8 924L1062 923.7L1066.1 923.4L1070 923L1073.7 922.5L1077.2 922L1080.6 921.4L1083.9 920.7L1087 920L1090 919.3L1092.6 918.6L1094.8 918L1096.8 917.4L1099 916.6L1101.5 915.7L1104.8 914.5L1108.9 913L1113.6 911.3L1118.7 909.5L1124 907.4L1129.3 905.3L1134.4 903L1139.4 900.6L1144.6 898L1149.8 895.3L1154.8 892.5L1159.6 889.6L1164 886.7L1168 883.6L1171.6 880.4L1175.1 877.1L1178.2 873.8L1181.2 870.6L1184 867.4L1186.6 864.4L1188.9 861.5L1191 858.6L1193 855.7L1194.9 852.7L1196.7 849.6L1198.5 846.3L1200.1 842.9L1201.7 839.3L1203.2 835.8L1204.5 832.3L1205.6 828.9L1206.5 825.6L1207.3 822.2L1208 818.9L1208.5 815.6L1208.9 812.5L1209.3 809.6L1209.6 806.7L1209.8 803.8L1210 801L1210.1 798.5L1210.1 796.4L1210.2 794.8L1210.2 640Z"/></clipPath>
<path d="M880.4 640L880.4 790L880.4 791.2L880.4 792.7L880.5 794.6L880.5 796.8L880.6 799.3L880.7 802L880.9 805.2L881 808.9L881.2 812.8L881.5 816.9L881.8 820.8L882.2 824.4L882.7 827.7L883.2 830.8L883.7 833.8L884.4 836.7L885.1 839.5L885.9 842.2L886.8 844.9L887.8 847.4L888.8 849.9L890 852.3L891.2 854.6L892.6 857L894.1 859.3L895.6 861.6L897.2 863.8L899 866L900.9 868.2L903 870.4L905.3 872.6L907.8 874.8L910.4 877.1L913.2 879.3L916.2 881.5L919.3 883.7L922.7 886L926.3 888.2L930 890.5L933.9 892.8L937.7 895L941.5 897L945.1 898.9L948.6 900.7L952.1 902.4L955.8 904.1L959.6 905.7L963.7 907.4L968.2 909.1L973.1 910.8L978.2 912.5L983.4 914.2L988.4 915.7L993.3 917L997.9 918.1L1002.5 919.1L1006.9 920L1011.3 920.7L1015.7 921.4L1020 922L1024.3 922.6L1028.5 923.1L1032.6 923.5L1036.7 923.9L1040.9 924.2L1045 924.3L1049.2 924.3L1053.5 924.2L1057.8 924L1062 923.7L1066.1 923.4L1070 923L1073.7 922.5L1077.2 922L1080.6 921.4L1083.9 920.7L1087 920L1090 919.3L1092.6 918.6L1094.8 918L1096.8 917.4L1099 916.6L1101.5 915.7L1104.8 914.5L1108.9 913L1113.6 911.3L1118.7 909.5L1124 907.4L1129.3 905.3L1134.4 903L1139.4 900.6L1144.6 898L1149.8 895.3L1154.8 892.5L1159.6 889.6L1164 886.7L1168 883.6L1171.6 880.4L1175.1 877.1L1178.2 873.8L1181.2 870.6L1184 867.4L1186.6 864.4L1188.9 861.5L1191 858.6L1193 855.7L1194.9 852.7L1196.7 849.6L1198.5 846.3L1200.1 842.9L1201.7 839.3L1203.2 835.8L1204.5 832.3L1205.6 828.9L1206.5 825.6L1207.3 822.2L1208 818.9L1208.5 815.6L1208.9 812.5L1209.3 809.6L1209.6 806.7L1209.8 803.8L1210 801L1210.1 798.5L1210.1 796.4L1210.2 794.8L1210.2 640Z" fill="url(#gThread)"/>
<g clip-path="url(#cBody)">
<path d="M1208.9 587.4L1210.5 597.5L1210.7 607.7L1209.7 617.8L1207.4 627.8L1203.8 637.7L1199 647.3L1193 656.7L1185.9 665.6L1177.6 674.1L1168.4 682L1158.2 689.4L1147.1 696.2L1135.2 702.3L1122.6 707.6L1109.4 712.2L1095.7 716.1L1081.6 719.1L1067.2 721.2L1052.7 722.6L1038.1 723L1023.6 722.6L1009.2 721.4L995.1 719.3L981.4 716.4L968.2 712.8L955.6 708.3L943.7 703.2L932.6 697.3L922.4 690.9L913.2 683.9L904.9 676.3L897.8 668.3L891.8 659.9L887 651.2L883.4 642.3L881.1 633.2L880.1 624L880.3 614.7L881.9 605.6L881.9 614.5L880.3 623.6L880.1 632.9L881.1 642.1L883.4 651.2L887 660.1L891.8 668.8L897.8 677.2L904.9 685.2L913.2 692.8L922.4 699.8L932.6 706.2L943.7 712.1L955.6 717.2L968.2 721.7L981.4 725.3L995.1 728.2L1009.2 730.3L1023.6 731.5L1038.1 731.9L1052.7 731.5L1067.2 730.1L1081.6 728L1095.7 725L1109.4 721.1L1122.6 716.5L1135.2 711.2L1147.1 705.1L1158.2 698.3L1168.4 690.9L1177.6 683L1185.9 674.5L1193 665.6L1199 656.2L1203.8 646.6L1207.4 636.7L1209.7 626.7L1210.7 616.6L1210.5 606.4L1208.9 596.3Z" fill="url(#gDark)"/>
<path d="M1208.9 582.8L1210.5 592.9L1210.7 603.1L1209.7 613.2L1207.4 623.2L1203.8 633.1L1199 642.7L1193 652.1L1185.9 661L1177.6 669.5L1168.4 677.4L1158.2 684.8L1147.1 691.6L1135.2 697.7L1122.6 703L1109.4 707.6L1095.7 711.5L1081.6 714.5L1067.2 716.6L1052.7 718L1038.1 718.4L1023.6 718L1009.2 716.8L995.1 714.7L981.4 711.8L968.2 708.2L955.6 703.7L943.7 698.6L932.6 692.7L922.4 686.3L913.2 679.3L904.9 671.7L897.8 663.7L891.8 655.3L887 646.6L883.4 637.7L881.1 628.6L880.1 619.4L880.3 610.1L881.9 601L881.9 605.6L880.3 614.7L880.1 624L881.1 633.2L883.4 642.3L887 651.2L891.8 659.9L897.8 668.3L904.9 676.3L913.2 683.9L922.4 690.9L932.6 697.3L943.7 703.2L955.6 708.3L968.2 712.8L981.4 716.4L995.1 719.3L1009.2 721.4L1023.6 722.6L1038.1 723L1052.7 722.6L1067.2 721.2L1081.6 719.1L1095.7 716.1L1109.4 712.2L1122.6 707.6L1135.2 702.3L1147.1 696.2L1158.2 689.4L1168.4 682L1177.6 674.1L1185.9 665.6L1193 656.7L1199 647.3L1203.8 637.7L1207.4 627.8L1209.7 617.8L1210.7 607.7L1210.5 597.5L1208.9 587.4Z" fill="url(#gCrest)"/>
<path d="M1208.9 582.8L1210.5 592.9L1210.7 603.1L1209.7 613.2L1207.4 623.2L1203.8 633.1L1199 642.7L1193 652.1L1185.9 661L1177.6 669.5L1168.4 677.4L1158.2 684.8L1147.1 691.6L1135.2 697.7L1122.6 703L1109.4 707.6L1095.7 711.5L1081.6 714.5L1067.2 716.6L1052.7 718L1038.1 718.4L1023.6 718L1009.2 716.8L995.1 714.7L981.4 711.8L968.2 708.2L955.6 703.7L943.7 698.6L932.6 692.7L922.4 686.3L913.2 679.3L904.9 671.7L897.8 663.7L891.8 655.3L887 646.6L883.4 637.7L881.1 628.6L880.1 619.4L880.3 610.1L881.9 601M1208.9 587.4L1210.5 597.5L1210.7 607.7L1209.7 617.8L1207.4 627.8L1203.8 637.7L1199 647.3L1193 656.7L1185.9 665.6L1177.6 674.1L1168.4 682L1158.2 689.4L1147.1 696.2L1135.2 702.3L1122.6 707.6L1109.4 712.2L1095.7 716.1L1081.6 719.1L1067.2 721.2L1052.7 722.6L1038.1 723L1023.6 722.6L1009.2 721.4L995.1 719.3L981.4 716.4L968.2 712.8L955.6 708.3L943.7 703.2L932.6 697.3L922.4 690.9L913.2 683.9L904.9 676.3L897.8 668.3L891.8 659.9L887 651.2L883.4 642.3L881.1 633.2L880.1 624L880.3 614.7L881.9 605.6M1208.9 596.3L1210.5 606.4L1210.7 616.6L1209.7 626.7L1207.4 636.7L1203.8 646.6L1199 656.2L1193 665.6L1185.9 674.5L1177.6 683L1168.4 690.9L1158.2 698.3L1147.1 705.1L1135.2 711.2L1122.6 716.5L1109.4 721.1L1095.7 725L1081.6 728L1067.2 730.1L1052.7 731.5L1038.1 731.9L1023.6 731.5L1009.2 730.3L995.1 728.2L981.4 725.3L968.2 721.7L955.6 717.2L943.7 712.1L932.6 706.2L922.4 699.8L913.2 692.8L904.9 685.2L897.8 677.2L891.8 668.8L887 660.1L883.4 651.2L881.1 642.1L880.1 632.9L880.3 623.6L881.9 614.5" fill="none" stroke="#111" stroke-width="1"/>
<path d="M1208.9 596.3L1210.5 606.4L1210.7 616.6L1209.7 626.7L1207.4 636.7L1203.8 646.6L1199 656.2L1193 665.6L1185.9 674.5L1177.6 683L1168.4 690.9L1158.2 698.3L1147.1 705.1L1135.2 711.2L1122.6 716.5L1109.4 721.1L1095.7 725L1081.6 728L1067.2 730.1L1052.7 731.5L1038.1 731.9L1023.6 731.5L1009.2 730.3L995.1 728.2L981.4 725.3L968.2 721.7L955.6 717.2L943.7 712.1L932.6 706.2L922.4 699.8L913.2 692.8L904.9 685.2L897.8 677.2L891.8 668.8L887 660.1L883.4 651.2L881.1 642.1L880.1 632.9L880.3 623.6L881.9 614.5L881.9 620L880.3 629.1L880.1 638.4L881.1 647.6L883.4 656.7L887 665.6L891.8 674.3L897.8 682.7L904.9 690.7L913.2 698.3L922.4 705.3L932.6 711.7L943.7 717.6L955.6 722.7L968.2 727.2L981.4 730.8L995.1 733.7L1009.2 735.8L1023.6 737L1038.1 737.4L1052.7 737L1067.2 735.6L1081.6 733.5L1095.7 730.5L1109.4 726.6L1122.6 722L1135.2 716.7L1147.1 710.6L1158.2 703.8L1168.4 696.4L1177.6 688.5L1185.9 680L1193 671.1L1199 661.7L1203.8 652.1L1207.4 642.2L1209.7 632.2L1210.7 622.1L1210.5 611.9L1208.9 601.8Z" fill="#000" opacity=".06"/>
<path d="M1208.9 620.6L1210.5 630.7L1210.7 640.9L1209.7 651L1207.4 661L1203.8 670.9L1199 680.5L1193 689.9L1185.9 698.8L1177.6 707.3L1168.4 715.2L1158.2 722.6L1147.1 729.4L1135.2 735.5L1122.6 740.8L1109.4 745.4L1095.7 749.3L1081.6 752.3L1067.2 754.4L1052.7 755.8L1038.1 756.2L1023.6 755.8L1009.2 754.6L995.1 752.5L981.4 749.6L968.2 746L955.6 741.5L943.7 736.4L932.6 730.5L922.4 724.1L913.2 717.1L904.9 709.5L897.8 701.5L891.8 693.1L887 684.4L883.4 675.5L881.1 666.4L880.1 657.2L880.3 647.9L881.9 638.8L881.9 647.7L880.3 656.8L880.1 666.1L881.1 675.3L883.4 684.4L887 693.3L891.8 702L897.8 710.4L904.9 718.4L913.2 726L922.4 733L932.6 739.4L943.7 745.3L955.6 750.4L968.2 754.9L981.4 758.5L995.1 761.4L1009.2 763.5L1023.6 764.7L1038.1 765.1L1052.7 764.7L1067.2 763.3L1081.6 761.2L1095.7 758.2L1109.4 754.3L1122.6 749.7L1135.2 744.4L1147.1 738.3L1158.2 731.5L1168.4 724.1L1177.6 716.2L1185.9 707.7L1193 698.8L1199 689.4L1203.8 679.8L1207.4 669.9L1209.7 659.9L1210.7 649.8L1210.5 639.6L1208.9 629.5Z" fill="url(#gDark)"/>
<path d="M1208.9 616L1210.5 626.1L1210.7 636.3L1209.7 646.4L1207.4 656.4L1203.8 666.3L1199 675.9L1193 685.3L1185.9 694.2L1177.6 702.7L1168.4 710.6L1158.2 718L1147.1 724.8L1135.2 730.9L1122.6 736.2L1109.4 740.8L1095.7 744.7L1081.6 747.7L1067.2 749.8L1052.7 751.2L1038.1 751.6L1023.6 751.2L1009.2 750L995.1 747.9L981.4 745L968.2 741.4L955.6 736.9L943.7 731.8L932.6 725.9L922.4 719.5L913.2 712.5L904.9 704.9L897.8 696.9L891.8 688.5L887 679.8L883.4 670.9L881.1 661.8L880.1 652.6L880.3 643.3L881.9 634.2L881.9 638.8L880.3 647.9L880.1 657.2L881.1 666.4L883.4 675.5L887 684.4L891.8 693.1L897.8 701.5L904.9 709.5L913.2 717.1L922.4 724.1L932.6 730.5L943.7 736.4L955.6 741.5L968.2 746L981.4 749.6L995.1 752.5L1009.2 754.6L1023.6 755.8L1038.1 756.2L1052.7 755.8L1067.2 754.4L1081.6 752.3L1095.7 749.3L1109.4 745.4L1122.6 740.8L1135.2 735.5L1147.1 729.4L1158.2 722.6L1168.4 715.2L1177.6 707.3L1185.9 698.8L1193 689.9L1199 680.5L1203.8 670.9L1207.4 661L1209.7 651L1210.7 640.9L1210.5 630.7L1208.9 620.6Z" fill="url(#gCrest)"/>
<path d="M1208.9 616L1210.5 626.1L1210.7 636.3L1209.7 646.4L1207.4 656.4L1203.8 666.3L1199 675.9L1193 685.3L1185.9 694.2L1177.6 702.7L1168.4 710.6L1158.2 718L1147.1 724.8L1135.2 730.9L1122.6 736.2L1109.4 740.8L1095.7 744.7L1081.6 747.7L1067.2 749.8L1052.7 751.2L1038.1 751.6L1023.6 751.2L1009.2 750L995.1 747.9L981.4 745L968.2 741.4L955.6 736.9L943.7 731.8L932.6 725.9L922.4 719.5L913.2 712.5L904.9 704.9L897.8 696.9L891.8 688.5L887 679.8L883.4 670.9L881.1 661.8L880.1 652.6L880.3 643.3L881.9 634.2M1208.9 620.6L1210.5 630.7L1210.7 640.9L1209.7 651L1207.4 661L1203.8 670.9L1199 680.5L1193 689.9L1185.9 698.8L1177.6 707.3L1168.4 715.2L1158.2 722.6L1147.1 729.4L1135.2 735.5L1122.6 740.8L1109.4 745.4L1095.7 749.3L1081.6 752.3L1067.2 754.4L1052.7 755.8L1038.1 756.2L1023.6 755.8L1009.2 754.6L995.1 752.5L981.4 749.6L968.2 746L955.6 741.5L943.7 736.4L932.6 730.5L922.4 724.1L913.2 717.1L904.9 709.5L897.8 701.5L891.8 693.1L887 684.4L883.4 675.5L881.1 666.4L880.1 657.2L880.3 647.9L881.9 638.8M1208.9 629.5L1210.5 639.6L1210.7 649.8L1209.7 659.9L1207.4 669.9L1203.8 679.8L1199 689.4L1193 698.8L1185.9 707.7L1177.6 716.2L1168.4 724.1L1158.2 731.5L1147.1 738.3L1135.2 744.4L1122.6 749.7L1109.4 754.3L1095.7 758.2L1081.6 761.2L1067.2 763.3L1052.7 764.7L1038.1 765.1L1023.6 764.7L1009.2 763.5L995.1 761.4L981.4 758.5L968.2 754.9L955.6 750.4L943.7 745.3L932.6 739.4L922.4 733L913.2 726L904.9 718.4L897.8 710.4L891.8 702L887 693.3L883.4 684.4L881.1 675.3L880.1 666.1L880.3 656.8L881.9 647.7" fill="none" stroke="#111" stroke-width="1"/>
<path d="M1208.9 629.5L1210.5 639.6L1210.7 649.8L1209.7 659.9L1207.4 669.9L1203.8 679.8L1199 689.4L1193 698.8L1185.9 707.7L1177.6 716.2L1168.4 724.1L1158.2 731.5L1147.1 738.3L1135.2 744.4L1122.6 749.7L1109.4 754.3L1095.7 758.2L1081.6 761.2L1067.2 763.3L1052.7 764.7L1038.1 765.1L1023.6 764.7L1009.2 763.5L995.1 761.4L981.4 758.5L968.2 754.9L955.6 750.4L943.7 745.3L932.6 739.4L922.4 733L913.2 726L904.9 718.4L897.8 710.4L891.8 702L887 693.3L883.4 684.4L881.1 675.3L880.1 666.1L880.3 656.8L881.9 647.7L881.9 653.2L880.3 662.3L880.1 671.6L881.1 680.8L883.4 689.9L887 698.8L891.8 707.5L897.8 715.9L904.9 723.9L913.2 731.5L922.4 738.5L932.6 744.9L943.7 750.8L955.6 755.9L968.2 760.4L981.4 764L995.1 766.9L1009.2 769L1023.6 770.2L1038.1 770.6L1052.7 770.2L1067.2 768.8L1081.6 766.7L1095.7 763.7L1109.4 759.8L1122.6 755.2L1135.2 749.9L1147.1 743.8L1158.2 737L1168.4 729.6L1177.6 721.7L1185.9 713.2L1193 704.3L1199 694.9L1203.8 685.3L1207.4 675.4L1209.7 665.4L1210.7 655.3L1210.5 645.1L1208.9 635Z" fill="#000" opacity=".06"/>
<path d="M1208.9 653.8L1210.5 663.9L1210.7 674.1L1209.7 684.2L1207.4 694.2L1203.8 704.1L1199 713.7L1193 723.1L1185.9 732L1177.6 740.5L1168.4 748.4L1158.2 755.8L1147.1 762.6L1135.2 768.7L1122.6 774L1109.4 778.6L1095.7 782.5L1081.6 785.5L1067.2 787.6L1052.7 789L1038.1 789.4L1023.6 789L1009.2 787.8L995.1 785.7L981.4 782.8L968.2 779.2L955.6 774.7L943.7 769.6L932.6 763.7L922.4 757.3L913.2 750.3L904.9 742.7L897.8 734.7L891.8 726.3L887 717.6L883.4 708.7L881.1 699.6L880.1 690.4L880.3 681.1L881.9 672L881.9 680.9L880.3 690L880.1 699.3L881.1 708.5L883.4 717.6L887 726.5L891.8 735.2L897.8 743.6L904.9 751.6L913.2 759.2L922.4 766.2L932.6 772.6L943.7 778.5L955.6 783.6L968.2 788.1L981.4 791.7L995.1 794.6L1009.2 796.7L1023.6 797.9L1038.1 798.3L1052.7 797.9L1067.2 796.5L1081.6 794.4L1095.7 791.4L1109.4 787.5L1122.6 782.9L1135.2 777.6L1147.1 771.5L1158.2 764.7L1168.4 757.3L1177.6 749.4L1185.9 740.9L1193 732L1199 722.6L1203.8 713L1207.4 703.1L1209.7 693.1L1210.7 683L1210.5 672.8L1208.9 662.7Z" fill="url(#gDark)"/>
<path d="M1208.9 649.2L1210.5 659.3L1210.7 669.5L1209.7 679.6L1207.4 689.6L1203.8 699.5L1199 709.1L1193 718.5L1185.9 727.4L1177.6 735.9L1168.4 743.8L1158.2 751.2L1147.1 758L1135.2 764.1L1122.6 769.4L1109.4 774L1095.7 777.9L1081.6 780.9L1067.2 783L1052.7 784.4L1038.1 784.8L1023.6 784.4L1009.2 783.2L995.1 781.1L981.4 778.2L968.2 774.6L955.6 770.1L943.7 765L932.6 759.1L922.4 752.7L913.2 745.7L904.9 738.1L897.8 730.1L891.8 721.7L887 713L883.4 704.1L881.1 695L880.1 685.8L880.3 676.5L881.9 667.4L881.9 672L880.3 681.1L880.1 690.4L881.1 699.6L883.4 708.7L887 717.6L891.8 726.3L897.8 734.7L904.9 742.7L913.2 750.3L922.4 757.3L932.6 763.7L943.7 769.6L955.6 774.7L968.2 779.2L981.4 782.8L995.1 785.7L1009.2 787.8L1023.6 789L1038.1 789.4L1052.7 789L1067.2 787.6L1081.6 785.5L1095.7 782.5L1109.4 778.6L1122.6 774L1135.2 768.7L1147.1 762.6L1158.2 755.8L1168.4 748.4L1177.6 740.5L1185.9 732L1193 723.1L1199 713.7L1203.8 704.1L1207.4 694.2L1209.7 684.2L1210.7 674.1L1210.5 663.9L1208.9 653.8Z" fill="url(#gCrest)"/>
<path d="M1208.9 649.2L1210.5 659.3L1210.7 669.5L1209.7 679.6L1207.4 689.6L1203.8 699.5L1199 709.1L1193 718.5L1185.9 727.4L1177.6 735.9L1168.4 743.8L1158.2 751.2L1147.1 758L1135.2 764.1L1122.6 769.4L1109.4 774L1095.7 777.9L1081.6 780.9L1067.2 783L1052.7 784.4L1038.1 784.8L1023.6 784.4L1009.2 783.2L995.1 781.1L981.4 778.2L968.2 774.6L955.6 770.1L943.7 765L932.6 759.1L922.4 752.7L913.2 745.7L904.9 738.1L897.8 730.1L891.8 721.7L887 713L883.4 704.1L881.1 695L880.1 685.8L880.3 676.5L881.9 667.4M1208.9 653.8L1210.5 663.9L1210.7 674.1L1209.7 684.2L1207.4 694.2L1203.8 704.1L1199 713.7L1193 723.1L1185.9 732L1177.6 740.5L1168.4 748.4L1158.2 755.8L1147.1 762.6L1135.2 768.7L1122.6 774L1109.4 778.6L1095.7 782.5L1081.6 785.5L1067.2 787.6L1052.7 789L1038.1 789.4L1023.6 789L1009.2 787.8L995.1 785.7L981.4 782.8L968.2 779.2L955.6 774.7L943.7 769.6L932.6 763.7L922.4 757.3L913.2 750.3L904.9 742.7L897.8 734.7L891.8 726.3L887 717.6L883.4 708.7L881.1 699.6L880.1 690.4L880.3 681.1L881.9 672M1208.9 662.7L1210.5 672.8L1210.7 683L1209.7 693.1L1207.4 703.1L1203.8 713L1199 722.6L1193 732L1185.9 740.9L1177.6 749.4L1168.4 757.3L1158.2 764.7L1147.1 771.5L1135.2 777.6L1122.6 782.9L1109.4 787.5L1095.7 791.4L1081.6 794.4L1067.2 796.5L1052.7 797.9L1038.1 798.3L1023.6 797.9L1009.2 796.7L995.1 794.6L981.4 791.7L968.2 788.1L955.6 783.6L943.7 778.5L932.6 772.6L922.4 766.2L913.2 759.2L904.9 751.6L897.8 743.6L891.8 735.2L887 726.5L883.4 717.6L881.1 708.5L880.1 699.3L880.3 690L881.9 680.9" fill="none" stroke="#111" stroke-width="1"/>
<path d="M1208.9 662.7L1210.5 672.8L1210.7 683L1209.7 693.1L1207.4 703.1L1203.8 713L1199 722.6L1193 732L1185.9 740.9L1177.6 749.4L1168.4 757.3L1158.2 764.7L1147.1 771.5L1135.2 777.6L1122.6 782.9L1109.4 787.5L1095.7 791.4L1081.6 794.4L1067.2 796.5L1052.7 797.9L1038.1 798.3L1023.6 797.9L1009.2 796.7L995.1 794.6L981.4 791.7L968.2 788.1L955.6 783.6L943.7 778.5L932.6 772.6L922.4 766.2L913.2 759.2L904.9 751.6L897.8 743.6L891.8 735.2L887 726.5L883.4 717.6L881.1 708.5L880.1 699.3L880.3 690L881.9 680.9L881.9 686.4L880.3 695.5L880.1 704.8L881.1 714L883.4 723.1L887 732L891.8 740.7L897.8 749.1L904.9 757.1L913.2 764.7L922.4 771.7L932.6 778.1L943.7 784L955.6 789.1L968.2 793.6L981.4 797.2L995.1 800.1L1009.2 802.2L1023.6 803.4L1038.1 803.8L1052.7 803.4L1067.2 802L1081.6 799.9L1095.7 796.9L1109.4 793L1122.6 788.4L1135.2 783.1L1147.1 777L1158.2 770.2L1168.4 762.8L1177.6 754.9L1185.9 746.4L1193 737.5L1199 728.1L1203.8 718.5L1207.4 708.6L1209.7 698.6L1210.7 688.5L1210.5 678.3L1208.9 668.2Z" fill="#000" opacity=".06"/>
<path d="M1208.9 687L1210.5 697.1L1210.7 707.3L1209.7 717.4L1207.4 727.4L1203.8 737.3L1199 746.9L1193 756.3L1185.9 765.2L1177.6 773.7L1168.4 781.6L1158.2 789L1147.1 795.8L1135.2 801.9L1122.6 807.2L1109.4 811.8L1095.7 815.7L1081.6 818.7L1067.2 820.8L1052.7 822.2L1038.1 822.6L1023.6 822.2L1009.2 821L995.1 818.9L981.4 816L968.2 812.4L955.6 807.9L943.7 802.8L932.6 796.9L922.4 790.5L913.2 783.5L904.9 775.9L897.8 767.9L891.8 759.5L887 750.8L883.4 741.9L881.1 732.8L880.1 723.6L880.3 714.3L881.9 705.2L881.9 714.1L880.3 723.2L880.1 732.5L881.1 741.7L883.4 750.8L887 759.7L891.8 768.4L897.8 776.8L904.9 784.8L913.2 792.4L922.4 799.4L932.6 805.8L943.7 811.7L955.6 816.8L968.2 821.3L981.4 824.9L995.1 827.8L1009.2 829.9L1023.6 831.1L1038.1 831.5L1052.7 831.1L1067.2 829.7L1081.6 827.6L1095.7 824.6L1109.4 820.7L1122.6 816.1L1135.2 810.8L1147.1 804.7L1158.2 797.9L1168.4 790.5L1177.6 782.6L1185.9 774.1L1193 765.2L1199 755.8L1203.8 746.2L1207.4 736.3L1209.7 726.3L1210.7 716.2L1210.5 706L1208.9 695.9Z" fill="url(#gDark)"/>
<path d="M1208.9 682.4L1210.5 692.5L1210.7 702.7L1209.7 712.8L1207.4 722.8L1203.8 732.7L1199 742.3L1193 751.7L1185.9 760.6L1177.6 769.1L1168.4 777L1158.2 784.4L1147.1 791.2L1135.2 797.3L1122.6 802.6L1109.4 807.2L1095.7 811.1L1081.6 814.1L1067.2 816.2L1052.7 817.6L1038.1 818L1023.6 817.6L1009.2 816.4L995.1 814.3L981.4 811.4L968.2 807.8L955.6 803.3L943.7 798.2L932.6 792.3L922.4 785.9L913.2 778.9L904.9 771.3L897.8 763.3L891.8 754.9L887 746.2L883.4 737.3L881.1 728.2L880.1 719L880.3 709.7L881.9 700.6L881.9 705.2L880.3 714.3L880.1 723.6L881.1 732.8L883.4 741.9L887 750.8L891.8 759.5L897.8 767.9L904.9 775.9L913.2 783.5L922.4 790.5L932.6 796.9L943.7 802.8L955.6 807.9L968.2 812.4L981.4 816L995.1 818.9L1009.2 821L1023.6 822.2L1038.1 822.6L1052.7 822.2L1067.2 820.8L1081.6 818.7L1095.7 815.7L1109.4 811.8L1122.6 807.2L1135.2 801.9L1147.1 795.8L1158.2 789L1168.4 781.6L1177.6 773.7L1185.9 765.2L1193 756.3L1199 746.9L1203.8 737.3L1207.4 727.4L1209.7 717.4L1210.7 707.3L1210.5 697.1L1208.9 687Z" fill="url(#gCrest)"/>
<path d="M1208.9 682.4L1210.5 692.5L1210.7 702.7L1209.7 712.8L1207.4 722.8L1203.8 732.7L1199 742.3L1193 751.7L1185.9 760.6L1177.6 769.1L1168.4 777L1158.2 784.4L1147.1 791.2L1135.2 797.3L1122.6 802.6L1109.4 807.2L1095.7 811.1L1081.6 814.1L1067.2 816.2L1052.7 817.6L1038.1 818L1023.6 817.6L1009.2 816.4L995.1 814.3L981.4 811.4L968.2 807.8L955.6 803.3L943.7 798.2L932.6 792.3L922.4 785.9L913.2 778.9L904.9 771.3L897.8 763.3L891.8 754.9L887 746.2L883.4 737.3L881.1 728.2L880.1 719L880.3 709.7L881.9 700.6M1208.9 687L1210.5 697.1L1210.7 707.3L1209.7 717.4L1207.4 727.4L1203.8 737.3L1199 746.9L1193 756.3L1185.9 765.2L1177.6 773.7L1168.4 781.6L1158.2 789L1147.1 795.8L1135.2 801.9L1122.6 807.2L1109.4 811.8L1095.7 815.7L1081.6 818.7L1067.2 820.8L1052.7 822.2L1038.1 822.6L1023.6 822.2L1009.2 821L995.1 818.9L981.4 816L968.2 812.4L955.6 807.9L943.7 802.8L932.6 796.9L922.4 790.5L913.2 783.5L904.9 775.9L897.8 767.9L891.8 759.5L887 750.8L883.4 741.9L881.1 732.8L880.1 723.6L880.3 714.3L881.9 705.2M1208.9 695.9L1210.5 706L1210.7 716.2L1209.7 726.3L1207.4 736.3L1203.8 746.2L1199 755.8L1193 765.2L1185.9 774.1L1177.6 782.6L1168.4 790.5L1158.2 797.9L1147.1 804.7L1135.2 810.8L1122.6 816.1L1109.4 820.7L1095.7 824.6L1081.6 827.6L1067.2 829.7L1052.7 831.1L1038.1 831.5L1023.6 831.1L1009.2 829.9L995.1 827.8L981.4 824.9L968.2 821.3L955.6 816.8L943.7 811.7L932.6 805.8L922.4 799.4L913.2 792.4L904.9 784.8L897.8 776.8L891.8 768.4L887 759.7L883.4 750.8L881.1 741.7L880.1 732.5L880.3 723.2L881.9 714.1" fill="none" stroke="#111" stroke-width="1"/>
<path d="M1208.9 695.9L1210.5 706L1210.7 716.2L1209.7 726.3L1207.4 736.3L1203.8 746.2L1199 755.8L1193 765.2L1185.9 774.1L1177.6 782.6L1168.4 790.5L1158.2 797.9L1147.1 804.7L1135.2 810.8L1122.6 816.1L1109.4 820.7L1095.7 824.6L1081.6 827.6L1067.2 829.7L1052.7 831.1L1038.1 831.5L1023.6 831.1L1009.2 829.9L995.1 827.8L981.4 824.9L968.2 821.3L955.6 816.8L943.7 811.7L932.6 805.8L922.4 799.4L913.2 792.4L904.9 784.8L897.8 776.8L891.8 768.4L887 759.7L883.4 750.8L881.1 741.7L880.1 732.5L880.3 723.2L881.9 714.1L881.9 719.6L880.3 728.7L880.1 738L881.1 747.2L883.4 756.3L887 765.2L891.8 773.9L897.8 782.3L904.9 790.3L913.2 797.9L922.4 804.9L932.6 811.3L943.7 817.2L955.6 822.3L968.2 826.8L981.4 830.4L995.1 833.3L1009.2 835.4L1023.6 836.6L1038.1 837L1052.7 836.6L1067.2 835.2L1081.6 833.1L1095.7 830.1L1109.4 826.2L1122.6 821.6L1135.2 816.3L1147.1 810.2L1158.2 803.4L1168.4 796L1177.6 788.1L1185.9 779.6L1193 770.7L1199 761.3L1203.8 751.7L1207.4 741.8L1209.7 731.8L1210.7 721.7L1210.5 711.5L1208.9 701.4Z" fill="#000" opacity=".06"/>
<path d="M1208.9 720.2L1210.5 730.3L1210.7 740.5L1209.7 750.6L1207.4 760.6L1203.8 770.5L1199 780.1L1193 789.5L1185.9 798.4L1177.6 806.9L1168.4 814.8L1158.2 822.2L1147.1 829L1135.2 835.1L1122.6 840.4L1109.4 845L1095.7 848.9L1081.6 851.9L1067.2 854L1052.7 855.4L1038.1 855.8L1023.6 855.4L1009.2 854.2L995.1 852.1L981.4 849.2L968.2 845.6L955.6 841.1L943.7 836L932.6 830.1L922.4 823.7L913.2 816.7L904.9 809.1L897.8 801.1L891.8 792.7L887 784L883.4 775.1L881.1 766L880.1 756.8L880.3 747.5L881.9 738.4L881.9 747.3L880.3 756.4L880.1 765.7L881.1 774.9L883.4 784L887 792.9L891.8 801.6L897.8 810L904.9 818L913.2 825.6L922.4 832.6L932.6 839L943.7 844.9L955.6 850L968.2 854.5L981.4 858.1L995.1 861L1009.2 863.1L1023.6 864.3L1038.1 864.7L1052.7 864.3L1067.2 862.9L1081.6 860.8L1095.7 857.8L1109.4 853.9L1122.6 849.3L1135.2 844L1147.1 837.9L1158.2 831.1L1168.4 823.7L1177.6 815.8L1185.9 807.3L1193 798.4L1199 789L1203.8 779.4L1207.4 769.5L1209.7 759.5L1210.7 749.4L1210.5 739.2L1208.9 729.1Z" fill="url(#gDark)"/>
<path d="M1208.9 715.6L1210.5 725.7L1210.7 735.9L1209.7 746L1207.4 756L1203.8 765.9L1199 775.5L1193 784.9L1185.9 793.8L1177.6 802.3L1168.4 810.2L1158.2 817.6L1147.1 824.4L1135.2 830.5L1122.6 835.8L1109.4 840.4L1095.7 844.3L1081.6 847.3L1067.2 849.4L1052.7 850.8L1038.1 851.2L1023.6 850.8L1009.2 849.6L995.1 847.5L981.4 844.6L968.2 841L955.6 836.5L943.7 831.4L932.6 825.5L922.4 819.1L913.2 812.1L904.9 804.5L897.8 796.5L891.8 788.1L887 779.4L883.4 770.5L881.1 761.4L880.1 752.2L880.3 742.9L881.9 733.8L881.9 738.4L880.3 747.5L880.1 756.8L881.1 766L883.4 775.1L887 784L891.8 792.7L897.8 801.1L904.9 809.1L913.2 816.7L922.4 823.7L932.6 830.1L943.7 836L955.6 841.1L968.2 845.6L981.4 849.2L995.1 852.1L1009.2 854.2L1023.6 855.4L1038.1 855.8L1052.7 855.4L1067.2 854L1081.6 851.9L1095.7 848.9L1109.4 845L1122.6 840.4L1135.2 835.1L1147.1 829L1158.2 822.2L1168.4 814.8L1177.6 806.9L1185.9 798.4L1193 789.5L1199 780.1L1203.8 770.5L1207.4 760.6L1209.7 750.6L1210.7 740.5L1210.5 730.3L1208.9 720.2Z" fill="url(#gCrest)"/>
<path d="M1208.9 715.6L1210.5 725.7L1210.7 735.9L1209.7 746L1207.4 756L1203.8 765.9L1199 775.5L1193 784.9L1185.9 793.8L1177.6 802.3L1168.4 810.2L1158.2 817.6L1147.1 824.4L1135.2 830.5L1122.6 835.8L1109.4 840.4L1095.7 844.3L1081.6 847.3L1067.2 849.4L1052.7 850.8L1038.1 851.2L1023.6 850.8L1009.2 849.6L995.1 847.5L981.4 844.6L968.2 841L955.6 836.5L943.7 831.4L932.6 825.5L922.4 819.1L913.2 812.1L904.9 804.5L897.8 796.5L891.8 788.1L887 779.4L883.4 770.5L881.1 761.4L880.1 752.2L880.3 742.9L881.9 733.8M1208.9 720.2L1210.5 730.3L1210.7 740.5L1209.7 750.6L1207.4 760.6L1203.8 770.5L1199 780.1L1193 789.5L1185.9 798.4L1177.6 806.9L1168.4 814.8L1158.2 822.2L1147.1 829L1135.2 835.1L1122.6 840.4L1109.4 845L1095.7 848.9L1081.6 851.9L1067.2 854L1052.7 855.4L1038.1 855.8L1023.6 855.4L1009.2 854.2L995.1 852.1L981.4 849.2L968.2 845.6L955.6 841.1L943.7 836L932.6 830.1L922.4 823.7L913.2 816.7L904.9 809.1L897.8 801.1L891.8 792.7L887 784L883.4 775.1L881.1 766L880.1 756.8L880.3 747.5L881.9 738.4M1208.9 729.1L1210.5 739.2L1210.7 749.4L1209.7 759.5L1207.4 769.5L1203.8 779.4L1199 789L1193 798.4L1185.9 807.3L1177.6 815.8L1168.4 823.7L1158.2 831.1L1147.1 837.9L1135.2 844L1122.6 849.3L1109.4 853.9L1095.7 857.8L1081.6 860.8L1067.2 862.9L1052.7 864.3L1038.1 864.7L1023.6 864.3L1009.2 863.1L995.1 861L981.4 858.1L968.2 854.5L955.6 850L943.7 844.9L932.6 839L922.4 832.6L913.2 825.6L904.9 818L897.8 810L891.8 801.6L887 792.9L883.4 784L881.1 774.9L880.1 765.7L880.3 756.4L881.9 747.3" fill="none" stroke="#111" stroke-width="1"/>
<path d="M1208.9 729.1L1210.5 739.2L1210.7 749.4L1209.7 759.5L1207.4 769.5L1203.8 779.4L1199 789L1193 798.4L1185.9 807.3L1177.6 815.8L1168.4 823.7L1158.2 831.1L1147.1 837.9L1135.2 844L1122.6 849.3L1109.4 853.9L1095.7 857.8L1081.6 860.8L1067.2 862.9L1052.7 864.3L1038.1 864.7L1023.6 864.3L1009.2 863.1L995.1 861L981.4 858.1L968.2 854.5L955.6 850L943.7 844.9L932.6 839L922.4 832.6L913.2 825.6L904.9 818L897.8 810L891.8 801.6L887 792.9L883.4 784L881.1 774.9L880.1 765.7L880.3 756.4L881.9 747.3L881.9 752.8L880.3 761.9L880.1 771.2L881.1 780.4L883.4 789.5L887 798.4L891.8 807.1L897.8 815.5L904.9 823.5L913.2 831.1L922.4 838.1L932.6 844.5L943.7 850.4L955.6 855.5L968.2 860L981.4 863.6L995.1 866.5L1009.2 868.6L1023.6 869.8L1038.1 870.2L1052.7 869.8L1067.2 868.4L1081.6 866.3L1095.7 863.3L1109.4 859.4L1122.6 854.8L1135.2 849.5L1147.1 843.4L1158.2 836.6L1168.4 829.2L1177.6 821.3L1185.9 812.8L1193 803.9L1199 794.5L1203.8 784.9L1207.4 775L1209.7 765L1210.7 754.9L1210.5 744.7L1208.9 734.6Z" fill="#000" opacity=".06"/>
<path d="M1208.9 753.4L1210.5 763.5L1210.7 773.7L1209.7 783.8L1207.4 793.8L1203.8 803.7L1199 813.3L1193 822.7L1185.9 831.6L1177.6 840.1L1168.4 848L1158.2 855.4L1147.1 862.2L1135.2 868.3L1122.6 873.6L1109.4 878.2L1095.7 882.1L1081.6 885.1L1067.2 887.2L1052.7 888.6L1038.1 889L1023.6 888.6L1009.2 887.4L995.1 885.3L981.4 882.4L968.2 878.8L955.6 874.3L943.7 869.2L932.6 863.3L922.4 856.9L913.2 849.9L904.9 842.3L897.8 834.3L891.8 825.9L887 817.2L883.4 808.3L881.1 799.2L880.1 790L880.3 780.7L881.9 771.6L881.9 780.5L880.3 789.6L880.1 798.9L881.1 808.1L883.4 817.2L887 826.1L891.8 834.8L897.8 843.2L904.9 851.2L913.2 858.8L922.4 865.8L932.6 872.2L943.7 878.1L955.6 883.2L968.2 887.7L981.4 891.3L995.1 894.2L1009.2 896.3L1023.6 897.5L1038.1 897.9L1052.7 897.5L1067.2 896.1L1081.6 894L1095.7 891L1109.4 887.1L1122.6 882.5L1135.2 877.2L1147.1 871.1L1158.2 864.3L1168.4 856.9L1177.6 849L1185.9 840.5L1193 831.6L1199 822.2L1203.8 812.6L1207.4 802.7L1209.7 792.7L1210.7 782.6L1210.5 772.4L1208.9 762.3Z" fill="url(#gDark)"/>
<path d="M1208.9 748.8L1210.5 758.9L1210.7 769.1L1209.7 779.2L1207.4 789.2L1203.8 799.1L1199 808.7L1193 818.1L1185.9 827L1177.6 835.5L1168.4 843.4L1158.2 850.8L1147.1 857.6L1135.2 863.7L1122.6 869L1109.4 873.6L1095.7 877.5L1081.6 880.5L1067.2 882.6L1052.7 884L1038.1 884.4L1023.6 884L1009.2 882.8L995.1 880.7L981.4 877.8L968.2 874.2L955.6 869.7L943.7 864.6L932.6 858.7L922.4 852.3L913.2 845.3L904.9 837.7L897.8 829.7L891.8 821.3L887 812.6L883.4 803.7L881.1 794.6L880.1 785.4L880.3 776.1L881.9 767L881.9 771.6L880.3 780.7L880.1 790L881.1 799.2L883.4 808.3L887 817.2L891.8 825.9L897.8 834.3L904.9 842.3L913.2 849.9L922.4 856.9L932.6 863.3L943.7 869.2L955.6 874.3L968.2 878.8L981.4 882.4L995.1 885.3L1009.2 887.4L1023.6 888.6L1038.1 889L1052.7 888.6L1067.2 887.2L1081.6 885.1L1095.7 882.1L1109.4 878.2L1122.6 873.6L1135.2 868.3L1147.1 862.2L1158.2 855.4L1168.4 848L1177.6 840.1L1185.9 831.6L1193 822.7L1199 813.3L1203.8 803.7L1207.4 793.8L1209.7 783.8L1210.7 773.7L1210.5 763.5L1208.9 753.4Z" fill="url(#gCrest)"/>
<path d="M1208.9 748.8L1210.5 758.9L1210.7 769.1L1209.7 779.2L1207.4 789.2L1203.8 799.1L1199 808.7L1193 818.1L1185.9 827L1177.6 835.5L1168.4 843.4L1158.2 850.8L1147.1 857.6L1135.2 863.7L1122.6 869L1109.4 873.6L1095.7 877.5L1081.6 880.5L1067.2 882.6L1052.7 884L1038.1 884.4L1023.6 884L1009.2 882.8L995.1 880.7L981.4 877.8L968.2 874.2L955.6 869.7L943.7 864.6L932.6 858.7L922.4 852.3L913.2 845.3L904.9 837.7L897.8 829.7L891.8 821.3L887 812.6L883.4 803.7L881.1 794.6L880.1 785.4L880.3 776.1L881.9 767M1208.9 753.4L1210.5 763.5L1210.7 773.7L1209.7 783.8L1207.4 793.8L1203.8 803.7L1199 813.3L1193 822.7L1185.9 831.6L1177.6 840.1L1168.4 848L1158.2 855.4L1147.1 862.2L1135.2 868.3L1122.6 873.6L1109.4 878.2L1095.7 882.1L1081.6 885.1L1067.2 887.2L1052.7 888.6L1038.1 889L1023.6 888.6L1009.2 887.4L995.1 885.3L981.4 882.4L968.2 878.8L955.6 874.3L943.7 869.2L932.6 863.3L922.4 856.9L913.2 849.9L904.9 842.3L897.8 834.3L891.8 825.9L887 817.2L883.4 808.3L881.1 799.2L880.1 790L880.3 780.7L881.9 771.6M1208.9 762.3L1210.5 772.4L1210.7 782.6L1209.7 792.7L1207.4 802.7L1203.8 812.6L1199 822.2L1193 831.6L1185.9 840.5L1177.6 849L1168.4 856.9L1158.2 864.3L1147.1 871.1L1135.2 877.2L1122.6 882.5L1109.4 887.1L1095.7 891L1081.6 894L1067.2 896.1L1052.7 897.5L1038.1 897.9L1023.6 897.5L1009.2 896.3L995.1 894.2L981.4 891.3L968.2 887.7L955.6 883.2L943.7 878.1L932.6 872.2L922.4 865.8L913.2 858.8L904.9 851.2L897.8 843.2L891.8 834.8L887 826.1L883.4 817.2L881.1 808.1L880.1 798.9L880.3 789.6L881.9 780.5" fill="none" stroke="#111" stroke-width="1"/>
<path d="M1208.9 762.3L1210.5 772.4L1210.7 782.6L1209.7 792.7L1207.4 802.7L1203.8 812.6L1199 822.2L1193 831.6L1185.9 840.5L1177.6 849L1168.4 856.9L1158.2 864.3L1147.1 871.1L1135.2 877.2L1122.6 882.5L1109.4 887.1L1095.7 891L1081.6 894L1067.2 896.1L1052.7 897.5L1038.1 897.9L1023.6 897.5L1009.2 896.3L995.1 894.2L981.4 891.3L968.2 887.7L955.6 883.2L943.7 878.1L932.6 872.2L922.4 865.8L913.2 858.8L904.9 851.2L897.8 843.2L891.8 834.8L887 826.1L883.4 817.2L881.1 808.1L880.1 798.9L880.3 789.6L881.9 780.5L881.9 786L880.3 795.1L880.1 804.4L881.1 813.6L883.4 822.7L887 831.6L891.8 840.3L897.8 848.7L904.9 856.7L913.2 864.3L922.4 871.3L932.6 877.7L943.7 883.6L955.6 888.7L968.2 893.2L981.4 896.8L995.1 899.7L1009.2 901.8L1023.6 903L1038.1 903.4L1052.7 903L1067.2 901.6L1081.6 899.5L1095.7 896.5L1109.4 892.6L1122.6 888L1135.2 882.7L1147.1 876.6L1158.2 869.8L1168.4 862.4L1177.6 854.5L1185.9 846L1193 837.1L1199 827.7L1203.8 818.1L1207.4 808.2L1209.7 798.2L1210.7 788.1L1210.5 777.9L1208.9 767.8Z" fill="#000" opacity=".06"/>
<path d="M1208.9 786.6L1210.5 796.7L1210.7 806.9L1209.7 817L1207.4 827L1203.8 836.9L1199 846.5L1193 855.9L1185.9 864.8L1177.6 873.3L1168.4 881.2L1158.2 888.6L1147.1 895.4L1135.2 901.5L1122.6 906.8L1109.4 911.4L1095.7 915.3L1081.6 918.3L1067.2 920.4L1052.7 921.8L1038.1 922.2L1023.6 921.8L1009.2 920.6L995.1 918.5L981.4 915.6L968.2 912L955.6 907.5L943.7 902.4L932.6 896.5L922.4 890.1L913.2 883.1L904.9 875.5L897.8 867.5L891.8 859.1L887 850.4L883.4 841.5L881.1 832.4L880.1 823.2L880.3 813.9L881.9 804.8L881.9 813.7L880.3 822.8L880.1 832.1L881.1 841.3L883.4 850.4L887 859.3L891.8 868L897.8 876.4L904.9 884.4L913.2 892L922.4 899L932.6 905.4L943.7 911.3L955.6 916.4L968.2 920.9L981.4 924.5L995.1 927.4L1009.2 929.5L1023.6 930.7L1038.1 931.1L1052.7 930.7L1067.2 929.3L1081.6 927.2L1095.7 924.2L1109.4 920.3L1122.6 915.7L1135.2 910.4L1147.1 904.3L1158.2 897.5L1168.4 890.1L1177.6 882.2L1185.9 873.7L1193 864.8L1199 855.4L1203.8 845.8L1207.4 835.9L1209.7 825.9L1210.7 815.8L1210.5 805.6L1208.9 795.5Z" fill="url(#gDark)"/>
<path d="M1208.9 782L1210.5 792.1L1210.7 802.3L1209.7 812.4L1207.4 822.4L1203.8 832.3L1199 841.9L1193 851.3L1185.9 860.2L1177.6 868.7L1168.4 876.6L1158.2 884L1147.1 890.8L1135.2 896.9L1122.6 902.2L1109.4 906.8L1095.7 910.7L1081.6 913.7L1067.2 915.8L1052.7 917.2L1038.1 917.6L1023.6 917.2L1009.2 916L995.1 913.9L981.4 911L968.2 907.4L955.6 902.9L943.7 897.8L932.6 891.9L922.4 885.5L913.2 878.5L904.9 870.9L897.8 862.9L891.8 854.5L887 845.8L883.4 836.9L881.1 827.8L880.1 818.6L880.3 809.3L881.9 800.2L881.9 804.8L880.3 813.9L880.1 823.2L881.1 832.4L883.4 841.5L887 850.4L891.8 859.1L897.8 867.5L904.9 875.5L913.2 883.1L922.4 890.1L932.6 896.5L943.7 902.4L955.6 907.5L968.2 912L981.4 915.6L995.1 918.5L1009.2 920.6L1023.6 921.8L1038.1 922.2L1052.7 921.8L1067.2 920.4L1081.6 918.3L1095.7 915.3L1109.4 911.4L1122.6 906.8L1135.2 901.5L1147.1 895.4L1158.2 888.6L1168.4 881.2L1177.6 873.3L1185.9 864.8L1193 855.9L1199 846.5L1203.8 836.9L1207.4 827L1209.7 817L1210.7 806.9L1210.5 796.7L1208.9 786.6Z" fill="url(#gCrest)"/>
<path d="M1208.9 782L1210.5 792.1L1210.7 802.3L1209.7 812.4L1207.4 822.4L1203.8 832.3L1199 841.9L1193 851.3L1185.9 860.2L1177.6 868.7L1168.4 876.6L1158.2 884L1147.1 890.8L1135.2 896.9L1122.6 902.2L1109.4 906.8L1095.7 910.7L1081.6 913.7L1067.2 915.8L1052.7 917.2L1038.1 917.6L1023.6 917.2L1009.2 916L995.1 913.9L981.4 911L968.2 907.4L955.6 902.9L943.7 897.8L932.6 891.9L922.4 885.5L913.2 878.5L904.9 870.9L897.8 862.9L891.8 854.5L887 845.8L883.4 836.9L881.1 827.8L880.1 818.6L880.3 809.3L881.9 800.2M1208.9 786.6L1210.5 796.7L1210.7 806.9L1209.7 817L1207.4 827L1203.8 836.9L1199 846.5L1193 855.9L1185.9 864.8L1177.6 873.3L1168.4 881.2L1158.2 888.6L1147.1 895.4L1135.2 901.5L1122.6 906.8L1109.4 911.4L1095.7 915.3L1081.6 918.3L1067.2 920.4L1052.7 921.8L1038.1 922.2L1023.6 921.8L1009.2 920.6L995.1 918.5L981.4 915.6L968.2 912L955.6 907.5L943.7 902.4L932.6 896.5L922.4 890.1L913.2 883.1L904.9 875.5L897.8 867.5L891.8 859.1L887 850.4L883.4 841.5L881.1 832.4L880.1 823.2L880.3 813.9L881.9 804.8M1208.9 795.5L1210.5 805.6L1210.7 815.8L1209.7 825.9L1207.4 835.9L1203.8 845.8L1199 855.4L1193 864.8L1185.9 873.7L1177.6 882.2L1168.4 890.1L1158.2 897.5L1147.1 904.3L1135.2 910.4L1122.6 915.7L1109.4 920.3L1095.7 924.2L1081.6 927.2L1067.2 929.3L1052.7 930.7L1038.1 931.1L1023.6 930.7L1009.2 929.5L995.1 927.4L981.4 924.5L968.2 920.9L955.6 916.4L943.7 911.3L932.6 905.4L922.4 899L913.2 892L904.9 884.4L897.8 876.4L891.8 868L887 859.3L883.4 850.4L881.1 841.3L880.1 832.1L880.3 822.8L881.9 813.7" fill="none" stroke="#111" stroke-width="1"/>
<path d="M1208.9 795.5L1210.5 805.6L1210.7 815.8L1209.7 825.9L1207.4 835.9L1203.8 845.8L1199 855.4L1193 864.8L1185.9 873.7L1177.6 882.2L1168.4 890.1L1158.2 897.5L1147.1 904.3L1135.2 910.4L1122.6 915.7L1109.4 920.3L1095.7 924.2L1081.6 927.2L1067.2 929.3L1052.7 930.7L1038.1 931.1L1023.6 930.7L1009.2 929.5L995.1 927.4L981.4 924.5L968.2 920.9L955.6 916.4L943.7 911.3L932.6 905.4L922.4 899L913.2 892L904.9 884.4L897.8 876.4L891.8 868L887 859.3L883.4 850.4L881.1 841.3L880.1 832.1L880.3 822.8L881.9 813.7L881.9 819.2L880.3 828.3L880.1 837.6L881.1 846.8L883.4 855.9L887 864.8L891.8 873.5L897.8 881.9L904.9 889.9L913.2 897.5L922.4 904.5L932.6 910.9L943.7 916.8L955.6 921.9L968.2 926.4L981.4 930L995.1 932.9L1009.2 935L1023.6 936.2L1038.1 936.6L1052.7 936.2L1067.2 934.8L1081.6 932.7L1095.7 929.7L1109.4 925.8L1122.6 921.2L1135.2 915.9L1147.1 909.8L1158.2 903L1168.4 895.6L1177.6 887.7L1185.9 879.2L1193 870.3L1199 860.9L1203.8 851.3L1207.4 841.4L1209.7 831.4L1210.7 821.3L1210.5 811.1L1208.9 801Z" fill="#000" opacity=".06"/>
<path d="M1208.9 819.8L1210.5 829.9L1210.7 840.1L1209.7 850.2L1207.4 860.2L1203.8 870.1L1199 879.7L1193 889.1L1185.9 898L1177.6 906.5L1168.4 914.4L1158.2 921.8L1147.1 928.6L1135.2 934.7L1122.6 940L1109.4 944.6L1095.7 948.5L1081.6 951.5L1067.2 953.6L1052.7 955L1038.1 955.4L1023.6 955L1009.2 953.8L995.1 951.7L981.4 948.8L968.2 945.2L955.6 940.7L943.7 935.6L932.6 929.7L922.4 923.3L913.2 916.3L904.9 908.7L897.8 900.7L891.8 892.3L887 883.6L883.4 874.7L881.1 865.6L880.1 856.4L880.3 847.1L881.9 838L881.9 846.9L880.3 856L880.1 865.3L881.1 874.5L883.4 883.6L887 892.5L891.8 901.2L897.8 909.6L904.9 917.6L913.2 925.2L922.4 932.2L932.6 938.6L943.7 944.5L955.6 949.6L968.2 954.1L981.4 957.7L995.1 960.6L1009.2 962.7L1023.6 963.9L1038.1 964.3L1052.7 963.9L1067.2 962.5L1081.6 960.4L1095.7 957.4L1109.4 953.5L1122.6 948.9L1135.2 943.6L1147.1 937.5L1158.2 930.7L1168.4 923.3L1177.6 915.4L1185.9 906.9L1193 898L1199 888.6L1203.8 879L1207.4 869.1L1209.7 859.1L1210.7 849L1210.5 838.8L1208.9 828.7Z" fill="url(#gDark)"/>
<path d="M1208.9 815.2L1210.5 825.3L1210.7 835.5L1209.7 845.6L1207.4 855.6L1203.8 865.5L1199 875.1L1193 884.5L1185.9 893.4L1177.6 901.9L1168.4 909.8L1158.2 917.2L1147.1 924L1135.2 930.1L1122.6 935.4L1109.4 940L1095.7 943.9L1081.6 946.9L1067.2 949L1052.7 950.4L1038.1 950.8L1023.6 950.4L1009.2 949.2L995.1 947.1L981.4 944.2L968.2 940.6L955.6 936.1L943.7 931L932.6 925.1L922.4 918.7L913.2 911.7L904.9 904.1L897.8 896.1L891.8 887.7L887 879L883.4 870.1L881.1 861L880.1 851.8L880.3 842.5L881.9 833.4L881.9 838L880.3 847.1L880.1 856.4L881.1 865.6L883.4 874.7L887 883.6L891.8 892.3L897.8 900.7L904.9 908.7L913.2 916.3L922.4 923.3L932.6 929.7L943.7 935.6L955.6 940.7L968.2 945.2L981.4 948.8L995.1 951.7L1009.2 953.8L1023.6 955L1038.1 955.4L1052.7 955L1067.2 953.6L1081.6 951.5L1095.7 948.5L1109.4 944.6L1122.6 940L1135.2 934.7L1147.1 928.6L1158.2 921.8L1168.4 914.4L1177.6 906.5L1185.9 898L1193 889.1L1199 879.7L1203.8 870.1L1207.4 860.2L1209.7 850.2L1210.7 840.1L1210.5 829.9L1208.9 819.8Z" fill="url(#gCrest)"/>
<path d="M1208.9 815.2L1210.5 825.3L1210.7 835.5L1209.7 845.6L1207.4 855.6L1203.8 865.5L1199 875.1L1193 884.5L1185.9 893.4L1177.6 901.9L1168.4 909.8L1158.2 917.2L1147.1 924L1135.2 930.1L1122.6 935.4L1109.4 940L1095.7 943.9L1081.6 946.9L1067.2 949L1052.7 950.4L1038.1 950.8L1023.6 950.4L1009.2 949.2L995.1 947.1L981.4 944.2L968.2 940.6L955.6 936.1L943.7 931L932.6 925.1L922.4 918.7L913.2 911.7L904.9 904.1L897.8 896.1L891.8 887.7L887 879L883.4 870.1L881.1 861L880.1 851.8L880.3 842.5L881.9 833.4M1208.9 819.8L1210.5 829.9L1210.7 840.1L1209.7 850.2L1207.4 860.2L1203.8 870.1L1199 879.7L1193 889.1L1185.9 898L1177.6 906.5L1168.4 914.4L1158.2 921.8L1147.1 928.6L1135.2 934.7L1122.6 940L1109.4 944.6L1095.7 948.5L1081.6 951.5L1067.2 953.6L1052.7 955L1038.1 955.4L1023.6 955L1009.2 953.8L995.1 951.7L981.4 948.8L968.2 945.2L955.6 940.7L943.7 935.6L932.6 929.7L922.4 923.3L913.2 916.3L904.9 908.7L897.8 900.7L891.8 892.3L887 883.6L883.4 874.7L881.1 865.6L880.1 856.4L880.3 847.1L881.9 838M1208.9 828.7L1210.5 838.8L1210.7 849L1209.7 859.1L1207.4 869.1L1203.8 879L1199 888.6L1193 898L1185.9 906.9L1177.6 915.4L1168.4 923.3L1158.2 930.7L1147.1 937.5L1135.2 943.6L1122.6 948.9L1109.4 953.5L1095.7 957.4L1081.6 960.4L1067.2 962.5L1052.7 963.9L1038.1 964.3L1023.6 963.9L1009.2 962.7L995.1 960.6L981.4 957.7L968.2 954.1L955.6 949.6L943.7 944.5L932.6 938.6L922.4 932.2L913.2 925.2L904.9 917.6L897.8 909.6L891.8 901.2L887 892.5L883.4 883.6L881.1 874.5L880.1 865.3L880.3 856L881.9 846.9" fill="none" stroke="#111" stroke-width="1"/>
<path d="M1208.9 828.7L1210.5 838.8L1210.7 849L1209.7 859.1L1207.4 869.1L1203.8 879L1199 888.6L1193 898L1185.9 906.9L1177.6 915.4L1168.4 923.3L1158.2 930.7L1147.1 937.5L1135.2 943.6L1122.6 948.9L1109.4 953.5L1095.7 957.4L1081.6 960.4L1067.2 962.5L1052.7 963.9L1038.1 964.3L1023.6 963.9L1009.2 962.7L995.1 960.6L981.4 957.7L968.2 954.1L955.6 949.6L943.7 944.5L932.6 938.6L922.4 932.2L913.2 925.2L904.9 917.6L897.8 909.6L891.8 901.2L887 892.5L883.4 883.6L881.1 874.5L880.1 865.3L880.3 856L881.9 846.9L881.9 852.4L880.3 861.5L880.1 870.8L881.1 880L883.4 889.1L887 898L891.8 906.7L897.8 915.1L904.9 923.1L913.2 930.7L922.4 937.7L932.6 944.1L943.7 950L955.6 955.1L968.2 959.6L981.4 963.2L995.1 966.1L1009.2 968.2L1023.6 969.4L1038.1 969.8L1052.7 969.4L1067.2 968L1081.6 965.9L1095.7 962.9L1109.4 959L1122.6 954.4L1135.2 949.1L1147.1 943L1158.2 936.2L1168.4 928.8L1177.6 920.9L1185.9 912.4L1193 903.5L1199 894.1L1203.8 884.5L1207.4 874.6L1209.7 864.6L1210.7 854.5L1210.5 844.3L1208.9 834.2Z" fill="#000" opacity=".06"/>
<path d="M1208.9 853L1210.5 863.1L1210.7 873.3L1209.7 883.4L1207.4 893.4L1203.8 903.3L1199 912.9L1193 922.3L1185.9 931.2L1177.6 939.7L1168.4 947.6L1158.2 955L1147.1 961.8L1135.2 967.9L1122.6 973.2L1109.4 977.8L1095.7 981.7L1081.6 984.7L1067.2 986.8L1052.7 988.2L1038.1 988.6L1023.6 988.2L1009.2 987L995.1 984.9L981.4 982L968.2 978.4L955.6 973.9L943.7 968.8L932.6 962.9L922.4 956.5L913.2 949.5L904.9 941.9L897.8 933.9L891.8 925.5L887 916.8L883.4 907.9L881.1 898.8L880.1 889.6L880.3 880.3L881.9 871.2L881.9 880.1L880.3 889.2L880.1 898.5L881.1 907.7L883.4 916.8L887 925.7L891.8 934.4L897.8 942.8L904.9 950.8L913.2 958.4L922.4 965.4L932.6 971.8L943.7 977.7L955.6 982.8L968.2 987.3L981.4 990.9L995.1 993.8L1009.2 995.9L1023.6 997.1L1038.1 997.5L1052.7 997.1L1067.2 995.7L1081.6 993.6L1095.7 990.6L1109.4 986.7L1122.6 982.1L1135.2 976.8L1147.1 970.7L1158.2 963.9L1168.4 956.5L1177.6 948.6L1185.9 940.1L1193 931.2L1199 921.8L1203.8 912.2L1207.4 902.3L1209.7 892.3L1210.7 882.2L1210.5 872L1208.9 861.9Z" fill="url(#gDark)"/>
<path d="M1208.9 848.4L1210.5 858.5L1210.7 868.7L1209.7 878.8L1207.4 888.8L1203.8 898.7L1199 908.3L1193 917.7L1185.9 926.6L1177.6 935.1L1168.4 943L1158.2 950.4L1147.1 957.2L1135.2 963.3L1122.6 968.6L1109.4 973.2L1095.7 977.1L1081.6 980.1L1067.2 982.2L1052.7 983.6L1038.1 984L1023.6 983.6L1009.2 982.4L995.1 980.3L981.4 977.4L968.2 973.8L955.6 969.3L943.7 964.2L932.6 958.3L922.4 951.9L913.2 944.9L904.9 937.3L897.8 929.3L891.8 920.9L887 912.2L883.4 903.3L881.1 894.2L880.1 885L880.3 875.7L881.9 866.6L881.9 871.2L880.3 880.3L880.1 889.6L881.1 898.8L883.4 907.9L887 916.8L891.8 925.5L897.8 933.9L904.9 941.9L913.2 949.5L922.4 956.5L932.6 962.9L943.7 968.8L955.6 973.9L968.2 978.4L981.4 982L995.1 984.9L1009.2 987L1023.6 988.2L1038.1 988.6L1052.7 988.2L1067.2 986.8L1081.6 984.7L1095.7 981.7L1109.4 977.8L1122.6 973.2L1135.2 967.9L1147.1 961.8L1158.2 955L1168.4 947.6L1177.6 939.7L1185.9 931.2L1193 922.3L1199 912.9L1203.8 903.3L1207.4 893.4L1209.7 883.4L1210.7 873.3L1210.5 863.1L1208.9 853Z" fill="url(#gCrest)"/>
<path d="M1208.9 848.4L1210.5 858.5L1210.7 868.7L1209.7 878.8L1207.4 888.8L1203.8 898.7L1199 908.3L1193 917.7L1185.9 926.6L1177.6 935.1L1168.4 943L1158.2 950.4L1147.1 957.2L1135.2 963.3L1122.6 968.6L1109.4 973.2L1095.7 977.1L1081.6 980.1L1067.2 982.2L1052.7 983.6L1038.1 984L1023.6 983.6L1009.2 982.4L995.1 980.3L981.4 977.4L968.2 973.8L955.6 969.3L943.7 964.2L932.6 958.3L922.4 951.9L913.2 944.9L904.9 937.3L897.8 929.3L891.8 920.9L887 912.2L883.4 903.3L881.1 894.2L880.1 885L880.3 875.7L881.9 866.6M1208.9 853L1210.5 863.1L1210.7 873.3L1209.7 883.4L1207.4 893.4L1203.8 903.3L1199 912.9L1193 922.3L1185.9 931.2L1177.6 939.7L1168.4 947.6L1158.2 955L1147.1 961.8L1135.2 967.9L1122.6 973.2L1109.4 977.8L1095.7 981.7L1081.6 984.7L1067.2 986.8L1052.7 988.2L1038.1 988.6L1023.6 988.2L1009.2 987L995.1 984.9L981.4 982L968.2 978.4L955.6 973.9L943.7 968.8L932.6 962.9L922.4 956.5L913.2 949.5L904.9 941.9L897.8 933.9L891.8 925.5L887 916.8L883.4 907.9L881.1 898.8L880.1 889.6L880.3 880.3L881.9 871.2M1208.9 861.9L1210.5 872L1210.7 882.2L1209.7 892.3L1207.4 902.3L1203.8 912.2L1199 921.8L1193 931.2L1185.9 940.1L1177.6 948.6L1168.4 956.5L1158.2 963.9L1147.1 970.7L1135.2 976.8L1122.6 982.1L1109.4 986.7L1095.7 990.6L1081.6 993.6L1067.2 995.7L1052.7 997.1L1038.1 997.5L1023.6 997.1L1009.2 995.9L995.1 993.8L981.4 990.9L968.2 987.3L955.6 982.8L943.7 977.7L932.6 971.8L922.4 965.4L913.2 958.4L904.9 950.8L897.8 942.8L891.8 934.4L887 925.7L883.4 916.8L881.1 907.7L880.1 898.5L880.3 889.2L881.9 880.1" fill="none" stroke="#111" stroke-width="1"/>
<path d="M1208.9 861.9L1210.5 872L1210.7 882.2L1209.7 892.3L1207.4 902.3L1203.8 912.2L1199 921.8L1193 931.2L1185.9 940.1L1177.6 948.6L1168.4 956.5L1158.2 963.9L1147.1 970.7L1135.2 976.8L1122.6 982.1L1109.4 986.7L1095.7 990.6L1081.6 993.6L1067.2 995.7L1052.7 997.1L1038.1 997.5L1023.6 997.1L1009.2 995.9L995.1 993.8L981.4 990.9L968.2 987.3L955.6 982.8L943.7 977.7L932.6 971.8L922.4 965.4L913.2 958.4L904.9 950.8L897.8 942.8L891.8 934.4L887 925.7L883.4 916.8L881.1 907.7L880.1 898.5L880.3 889.2L881.9 880.1L881.9 885.6L880.3 894.7L880.1 904L881.1 913.2L883.4 922.3L887 931.2L891.8 939.9L897.8 948.3L904.9 956.3L913.2 963.9L922.4 970.9L932.6 977.3L943.7 983.2L955.6 988.3L968.2 992.8L981.4 996.4L995.1 999.3L1009.2 1001.4L1023.6 1002.6L1038.1 1003L1052.7 1002.6L1067.2 1001.2L1081.6 999.1L1095.7 996.1L1109.4 992.2L1122.6 987.6L1135.2 982.3L1147.1 976.2L1158.2 969.4L1168.4 962L1177.6 954.1L1185.9 945.6L1193 936.7L1199 927.3L1203.8 917.7L1207.4 907.8L1209.7 897.8L1210.7 887.7L1210.5 877.5L1208.9 867.4Z" fill="#000" opacity=".06"/>
</g>
<path d="M880.4 640L880.4 790L880.4 791.2L880.4 792.7L880.5 794.6L880.5 796.8L880.6 799.3L880.7 802L880.9 805.2L881 808.9L881.2 812.8L881.5 816.9L881.8 820.8L882.2 824.4L882.7 827.7L883.2 830.8L883.7 833.8L884.4 836.7L885.1 839.5L885.9 842.2L886.8 844.9L887.8 847.4L888.8 849.9L890 852.3L891.2 854.6L892.6 857L894.1 859.3L895.6 861.6L897.2 863.8L899 866L900.9 868.2L903 870.4L905.3 872.6L907.8 874.8L910.4 877.1L913.2 879.3L916.2 881.5L919.3 883.7L922.7 886L926.3 888.2L930 890.5L933.9 892.8L937.7 895L941.5 897L945.1 898.9L948.6 900.7L952.1 902.4L955.8 904.1L959.6 905.7L963.7 907.4L968.2 909.1L973.1 910.8L978.2 912.5L983.4 914.2L988.4 915.7L993.3 917L997.9 918.1L1002.5 919.1L1006.9 920L1011.3 920.7L1015.7 921.4L1020 922L1024.3 922.6L1028.5 923.1L1032.6 923.5L1036.7 923.9L1040.9 924.2L1045 924.3L1049.2 924.3L1053.5 924.2L1057.8 924L1062 923.7L1066.1 923.4L1070 923L1073.7 922.5L1077.2 922L1080.6 921.4L1083.9 920.7L1087 920L1090 919.3L1092.6 918.6L1094.8 918L1096.8 917.4L1099 916.6L1101.5 915.7L1104.8 914.5L1108.9 913L1113.6 911.3L1118.7 909.5L1124 907.4L1129.3 905.3L1134.4 903L1139.4 900.6L1144.6 898L1149.8 895.3L1154.8 892.5L1159.6 889.6L1164 886.7L1168 883.6L1171.6 880.4L1175.1 877.1L1178.2 873.8L1181.2 870.6L1184 867.4L1186.6 864.4L1188.9 861.5L1191 858.6L1193 855.7L1194.9 852.7L1196.7 849.6L1198.5 846.3L1200.1 842.9L1201.7 839.3L1203.2 835.8L1204.5 832.3L1205.6 828.9L1206.5 825.6L1207.3 822.2L1208 818.9L1208.5 815.6L1208.9 812.5L1209.3 809.6L1209.6 806.7L1209.8 803.8L1210 801L1210.1 798.5L1210.1 796.4L1210.2 794.8L1210.2 640Z" fill="none" stroke="#111" stroke-width="1.1"/>
<g clip-path="url(#cBody)"><path d="M864.3 566.3L886.8 696.6L1067.5 746.4L1226 670L1226 686L1067.5 766.4L886.8 712.6L864.3 582.3Z" fill="#000" opacity=".33" filter="url(#fBlurS)"/></g>
<path d="M864.3 517L886.8 647.3L886.8 696.6L864.3 566.3Z" fill="url(#gHexL)" fill-opacity="0.95" stroke="#111" stroke-width="1.1" stroke-linejoin="round"/>
<path d="M886.8 647.3L1067.5 697.1L1067.5 746.4L886.8 696.6Z" fill="url(#gHexFL)" fill-opacity="0.9" stroke="#111" stroke-width="1.1" stroke-linejoin="round"/>
<path d="M1067.5 697.1L1226 620.7L1226 670L1067.5 746.4Z" fill="url(#gHexFR)" fill-opacity="0.97" stroke="#111" stroke-width="1.1" stroke-linejoin="round"/>
<path d="M864.3 517L1022.9 440.6L1203.9 491.5L1226 620.7L1067.5 697.1L886.8 647.3Z" fill="url(#gHexT)" stroke="#111" stroke-width="1.1" stroke-linejoin="round"/>
<path d="M972.9 506.1L952.3 549.4L950.7 553.4L949.4 557.4L948.5 561.5L947.9 565.6L947.8 569.8L948.1 573.9L948.7 578L949.8 582.1L951.2 586.1L953.1 590L955.3 593.9L957.8 597.6L960.7 601.3L964 604.8L967.6 608.2L971.5 611.4L975.7 614.4L980.2 617.3L984.9 619.9L989.9 622.4L995.1 624.6L1000.6 626.7L1006.2 628.4L1011.9 630L1017.8 631.3L1023.8 632.3L1029.9 633.1L1036.1 633.6L1042.3 633.9L1048.5 633.9L1054.7 633.6L1060.9 633.1L1067 632.3L1073 631.3L1078.9 630L1084.6 628.4L1090.2 626.7L1095.7 624.6L1100.9 622.4L1105.9 619.9L1110.6 617.3L1115.1 614.4L1119.3 611.4L1123.2 608.2L1126.8 604.8L1130.1 601.3L1133 597.6L1135.5 593.9L1137.7 590L1139.6 586.1L1141 582.1L1142.1 578L1142.7 573.9L1143 569.8L1142.9 565.6L1142.3 561.5L1141.4 557.4L1140.1 553.4L1138.5 549.4L1117.9 506.1L1116.2 503.1L1114.3 500L1112.1 497.1L1109.6 494.3L1106.8 491.6L1103.7 489L1100.5 486.6L1097 484.3L1093.2 482.1L1089.3 480.1L1085.2 478.3L1080.9 476.7L1076.5 475.3L1071.9 474L1067.3 473L1062.5 472.2L1057.7 471.5L1052.8 471.1L1047.9 470.9L1042.9 470.9L1038 471.1L1033.1 471.5L1028.3 472.2L1023.5 473L1018.9 474L1014.3 475.3L1009.9 476.7L1005.6 478.3L1001.5 480.1L997.6 482.1L993.8 484.3L990.3 486.6L987.1 489L984 491.6L981.2 494.3L978.7 497.1L976.5 500L974.6 503.1L972.9 506.1Z" fill="url(#gBarb)"/>
<path d="M952.3 549.4L950.9 552.8L949.7 556.3L948.8 559.7L948.2 563.2L947.9 566.8L947.8 570.3L948.1 573.8L948.6 577.3L949.4 580.8L950.5 584.3L951.9 587.7L953.6 591L955.5 594.3L957.7 597.5L960.2 600.7L962.9 603.7L965.9 606.6L969.1 609.5L972.5 612.2L976.1 614.7L980 617.2L984 619.5L988.2 621.6L992.6 623.6L997.2 625.4L1001.8 627.1L1006.7 628.6L1011.6 629.9L1016.6 631L1021.7 632L1026.9 632.7L1032.2 633.3L1037.4 633.7L1042.7 633.9L1048.1 633.9L1053.4 633.7L1058.6 633.3L1063.9 632.7L1069.1 632L1074.2 631L1079.2 629.9L1084.1 628.6L1089 627.1L1093.6 625.4L1098.2 623.6L1102.6 621.6L1106.8 619.5L1110.8 617.2L1114.7 614.7L1118.3 612.2L1121.7 609.5L1124.9 606.6L1127.9 603.7L1130.6 600.7L1133.1 597.5L1135.3 594.3L1137.2 591L1138.9 587.7L1140.3 584.3L1141.4 580.8L1142.2 577.3L1142.7 573.8L1143 570.3L1142.9 566.8L1142.6 563.2L1142 559.7L1141.1 556.3L1139.9 552.8L1138.5 549.4" fill="none" stroke="#111" stroke-width="1.2"/>
<path d="M972.9 506.1L952.3 549.4M1117.9 506.1L1138.5 549.4" stroke="#111" stroke-width="1.1" fill="none"/>
<path d="M973.1 457.4L952.6 499.3L950.9 503.3L949.5 507.3L948.5 511.4L948 515.6L947.8 519.7L948 523.9L948.7 528L949.7 532.1L951.1 536.1L952.9 540.1L955.1 544L957.6 547.8L960.5 551.4L963.8 555L967.3 558.4L971.3 561.6L975.5 564.7L979.9 567.5L984.7 570.2L989.7 572.7L994.9 575L1000.4 577L1006 578.8L1011.8 580.3L1017.7 581.6L1023.7 582.7L1029.9 583.5L1036.1 584L1042.3 584.3L1048.5 584.3L1054.7 584L1060.9 583.5L1067.1 582.7L1073.1 581.6L1079 580.3L1084.8 578.8L1090.4 577L1095.9 575L1101.1 572.7L1106.1 570.2L1110.9 567.5L1115.3 564.7L1119.5 561.6L1123.5 558.4L1127 555L1130.3 551.4L1133.2 547.8L1135.7 544L1137.9 540.1L1139.7 536.1L1141.1 532.1L1142.1 528L1142.8 523.9L1143 519.7L1142.8 515.6L1142.3 511.4L1141.3 507.3L1139.9 503.3L1138.2 499.3L1117.7 457.4L1116 454.3L1114 451.3L1111.8 448.4L1109.3 445.6L1106.5 442.9L1103.5 440.4L1100.2 438L1096.7 435.7L1093 433.6L1089.1 431.6L1085 429.8L1080.7 428.2L1076.3 426.8L1071.8 425.6L1067.1 424.6L1062.4 423.7L1057.6 423.1L1052.7 422.7L1047.8 422.5L1043 422.5L1038.1 422.7L1033.2 423.1L1028.4 423.7L1023.7 424.6L1019 425.6L1014.5 426.8L1010.1 428.2L1005.8 429.8L1001.7 431.6L997.8 433.6L994.1 435.7L990.6 438L987.3 440.4L984.3 442.9L981.5 445.6L979 448.4L976.8 451.3L974.8 454.3L973.1 457.4Z" fill="url(#gBarb)"/>
<path d="M952.6 499.3L951.1 502.7L949.9 506.2L948.9 509.7L948.3 513.2L947.9 516.7L947.8 520.3L948 523.8L948.5 527.3L949.3 530.8L950.4 534.3L951.8 537.7L953.4 541.1L955.3 544.4L957.5 547.7L960 550.8L962.7 553.9L965.6 556.8L968.8 559.7L972.3 562.4L975.9 565L979.7 567.4L983.8 569.7L988 571.9L992.4 573.9L997 575.8L1001.7 577.4L1006.5 578.9L1011.5 580.3L1016.5 581.4L1021.6 582.4L1026.8 583.1L1032.1 583.7L1037.4 584.1L1042.7 584.3L1048.1 584.3L1053.4 584.1L1058.7 583.7L1064 583.1L1069.2 582.4L1074.3 581.4L1079.3 580.3L1084.3 578.9L1089.1 577.4L1093.8 575.8L1098.4 573.9L1102.8 571.9L1107 569.7L1111.1 567.4L1114.9 565L1118.5 562.4L1122 559.7L1125.2 556.8L1128.1 553.9L1130.8 550.8L1133.3 547.7L1135.5 544.4L1137.4 541.1L1139 537.7L1140.4 534.3L1141.5 530.8L1142.3 527.3L1142.8 523.8L1143 520.3L1142.9 516.7L1142.5 513.2L1141.9 509.7L1140.9 506.2L1139.7 502.7L1138.2 499.3" fill="none" stroke="#111" stroke-width="1.2"/>
<path d="M973.1 457.4L952.6 499.3M1117.7 457.4L1138.2 499.3" stroke="#111" stroke-width="1.1" fill="none"/>
<path d="M972.1 407.3L951.9 452.5L950.3 456.4L949.1 460.5L948.3 464.5L947.9 468.6L947.8 472.7L948.2 476.8L948.9 480.8L950.1 484.9L951.6 488.8L953.4 492.7L955.7 496.5L958.3 500.2L961.2 503.8L964.5 507.3L968.1 510.6L972 513.8L976.2 516.8L980.7 519.6L985.4 522.2L990.4 524.6L995.6 526.8L1000.9 528.8L1006.5 530.5L1012.2 532L1018.1 533.3L1024 534.3L1030.1 535.1L1036.2 535.6L1042.3 535.9L1048.5 535.9L1054.6 535.6L1060.7 535.1L1066.8 534.3L1072.7 533.3L1078.6 532L1084.3 530.5L1089.9 528.8L1095.2 526.8L1100.4 524.6L1105.4 522.2L1110.1 519.6L1114.6 516.8L1118.8 513.8L1122.7 510.6L1126.3 507.3L1129.6 503.8L1132.5 500.2L1135.1 496.5L1137.4 492.7L1139.2 488.8L1140.7 484.9L1141.9 480.8L1142.6 476.8L1143 472.7L1142.9 468.6L1142.5 464.5L1141.7 460.5L1140.5 456.4L1138.9 452.5L1118.7 407.3L1117.1 404.1L1115.2 401L1113 398L1110.5 395.1L1107.8 392.3L1104.7 389.7L1101.4 387.2L1097.9 384.8L1094.1 382.6L1090.1 380.5L1085.9 378.7L1081.6 377L1077.1 375.5L1072.5 374.2L1067.7 373.1L1062.8 372.3L1057.9 371.6L1052.9 371.2L1047.9 371L1042.9 371L1037.9 371.2L1032.9 371.6L1028 372.3L1023.1 373.1L1018.3 374.2L1013.7 375.5L1009.2 377L1004.9 378.7L1000.7 380.5L996.7 382.6L992.9 384.8L989.4 387.2L986.1 389.7L983 392.3L980.3 395.1L977.8 398L975.6 401L973.7 404.1L972.1 407.3Z" fill="url(#gBarb)"/>
<path d="M951.9 452.5L950.5 455.9L949.4 459.3L948.6 462.7L948.1 466.2L947.8 469.7L947.9 473.2L948.2 476.7L948.8 480.2L949.7 483.6L950.8 487.1L952.3 490.4L954 493.7L956 497L958.2 500.1L960.7 503.2L963.4 506.2L966.4 509.1L969.6 511.9L973 514.5L976.6 517.1L980.5 519.5L984.5 521.7L988.7 523.8L993.1 525.8L997.6 527.6L1002.2 529.2L1007 530.7L1011.9 532L1016.9 533.1L1022 534L1027.1 534.8L1032.3 535.3L1037.5 535.7L1042.8 535.9L1048 535.9L1053.3 535.7L1058.5 535.3L1063.7 534.8L1068.8 534L1073.9 533.1L1078.9 532L1083.8 530.7L1088.6 529.2L1093.2 527.6L1097.7 525.8L1102.1 523.8L1106.3 521.7L1110.3 519.5L1114.2 517.1L1117.8 514.5L1121.2 511.9L1124.4 509.1L1127.4 506.2L1130.1 503.2L1132.6 500.1L1134.8 497L1136.8 493.7L1138.5 490.4L1140 487.1L1141.1 483.6L1142 480.2L1142.6 476.7L1142.9 473.2L1143 469.7L1142.7 466.2L1142.2 462.7L1141.4 459.3L1140.3 455.9L1138.9 452.5" fill="none" stroke="#111" stroke-width="1.2"/>
<path d="M972.1 407.3L951.9 452.5M1118.7 407.3L1138.9 452.5" stroke="#111" stroke-width="1.1" fill="none"/>
<path d="M968.9 406.1L968.9 421.8L969.1 425.9L969.9 430L971.1 434L972.8 437.9L975 441.7L977.7 445.4L980.7 449L984.2 452.4L988.1 455.5L992.4 458.5L997 461.2L1001.9 463.7L1007.2 465.9L1012.6 467.8L1018.3 469.4L1024.1 470.7L1030.1 471.6L1036.2 472.3L1042.3 472.6L1048.5 472.6L1054.6 472.3L1060.7 471.6L1066.7 470.7L1072.5 469.4L1078.2 467.8L1083.7 465.9L1088.9 463.7L1093.8 461.2L1098.4 458.5L1102.7 455.5L1106.6 452.4L1110.1 449L1113.1 445.4L1115.8 441.7L1118 437.9L1119.7 434L1120.9 430L1121.7 425.9L1121.9 421.8L1121.9 406.1L1121.7 410.2L1120.9 414.3L1119.7 418.3L1118 422.2L1115.8 426L1113.1 429.7L1110.1 433.3L1106.6 436.7L1102.7 439.8L1098.4 442.8L1093.8 445.5L1088.9 448L1083.7 450.2L1078.2 452.1L1072.5 453.7L1066.7 455L1060.7 455.9L1054.6 456.6L1048.5 456.9L1042.3 456.9L1036.2 456.6L1030.1 455.9L1024.1 455L1018.3 453.7L1012.6 452.1L1007.2 450.2L1001.9 448L997 445.5L992.4 442.8L988.1 439.8L984.2 436.7L980.7 433.3L977.7 429.7L975 426L972.8 422.2L971.1 418.3L969.9 414.3L969.1 410.2L968.9 406.1Z" fill="url(#gCyl)"/>
<path d="M968.9 421.8A76.5 50.9 0 0 0 1121.9 421.8" fill="none" stroke="#111" stroke-width="1.2"/>
<path d="M968.9 406.1V421.8M1121.9 406.1V421.8" stroke="#333" stroke-width=".9" fill="none"/>
<ellipse cx="1045.4" cy="406.1" rx="76" ry="50.5" fill="#3566b3"/>
<clipPath id="cAll"><path d="M880.4 640L880.4 790L880.4 791.2L880.4 792.7L880.5 794.6L880.5 796.8L880.6 799.3L880.7 802L880.9 805.2L881 808.9L881.2 812.8L881.5 816.9L881.8 820.8L882.2 824.4L882.7 827.7L883.2 830.8L883.7 833.8L884.4 836.7L885.1 839.5L885.9 842.2L886.8 844.9L887.8 847.4L888.8 849.9L890 852.3L891.2 854.6L892.6 857L894.1 859.3L895.6 861.6L897.2 863.8L899 866L900.9 868.2L903 870.4L905.3 872.6L907.8 874.8L910.4 877.1L913.2 879.3L916.2 881.5L919.3 883.7L922.7 886L926.3 888.2L930 890.5L933.9 892.8L937.7 895L941.5 897L945.1 898.9L948.6 900.7L952.1 902.4L955.8 904.1L959.6 905.7L963.7 907.4L968.2 909.1L973.1 910.8L978.2 912.5L983.4 914.2L988.4 915.7L993.3 917L997.9 918.1L1002.5 919.1L1006.9 920L1011.3 920.7L1015.7 921.4L1020 922L1024.3 922.6L1028.5 923.1L1032.6 923.5L1036.7 923.9L1040.9 924.2L1045 924.3L1049.2 924.3L1053.5 924.2L1057.8 924L1062 923.7L1066.1 923.4L1070 923L1073.7 922.5L1077.2 922L1080.6 921.4L1083.9 920.7L1087 920L1090 919.3L1092.6 918.6L1094.8 918L1096.8 917.4L1099 916.6L1101.5 915.7L1104.8 914.5L1108.9 913L1113.6 911.3L1118.7 909.5L1124 907.4L1129.3 905.3L1134.4 903L1139.4 900.6L1144.6 898L1149.8 895.3L1154.8 892.5L1159.6 889.6L1164 886.7L1168 883.6L1171.6 880.4L1175.1 877.1L1178.2 873.8L1181.2 870.6L1184 867.4L1186.6 864.4L1188.9 861.5L1191 858.6L1193 855.7L1194.9 852.7L1196.7 849.6L1198.5 846.3L1200.1 842.9L1201.7 839.3L1203.2 835.8L1204.5 832.3L1205.6 828.9L1206.5 825.6L1207.3 822.2L1208 818.9L1208.5 815.6L1208.9 812.5L1209.3 809.6L1209.6 806.7L1209.8 803.8L1210 801L1210.1 798.5L1210.1 796.4L1210.2 794.8L1210.2 640Z"/><path d="M864.3 517L1022.9 440.6L1203.9 491.5L1226 620.7L1067.5 697.1L886.8 647.3Z"/><path d="M864.3 517L886.8 647.3L1067.5 697.1L1226 620.7L1226 670L1067.5 746.4L886.8 696.6L864.3 566.3Z"/><path d="M969.4 406L947.8 471V580H1143V471Z"/><ellipse cx="1045.4" cy="406" rx="77" ry="51.2"/></clipPath><g clip-path="url(#cAll)"><ellipse cx="1045.4" cy="471" rx="97.6" ry="64.9" fill="none" stroke="#151515" stroke-width="0.8" stroke-dasharray="8 3" opacity="0.45"/><ellipse cx="1045.4" cy="473" rx="76" ry="50.5" fill="none" stroke="#151515" stroke-width="0.8" stroke-dasharray="8 3" opacity="0.4"/><ellipse cx="1045.4" cy="519.4" rx="97.6" ry="64.9" fill="none" stroke="#151515" stroke-width="0.8" stroke-dasharray="8 3" opacity="0.45"/><ellipse cx="1045.4" cy="521.4" rx="76" ry="50.5" fill="none" stroke="#151515" stroke-width="0.8" stroke-dasharray="8 3" opacity="0.4"/><ellipse cx="1045.4" cy="569" rx="97.6" ry="64.9" fill="none" stroke="#151515" stroke-width="0.8" stroke-dasharray="8 3" opacity="0.45"/><ellipse cx="1045.4" cy="571" rx="76" ry="50.5" fill="none" stroke="#151515" stroke-width="0.8" stroke-dasharray="8 3" opacity="0.4"/><ellipse cx="1045.4" cy="428.1" rx="62" ry="41.2" fill="none" stroke="#151515" stroke-width="0.8" stroke-dasharray="8 3" opacity="0.3"/><ellipse cx="1045.4" cy="569" rx="76" ry="50.5" fill="none" stroke="#151515" stroke-width="0.8" stroke-dasharray="8 3" opacity="0.4"/><path d="M1022.9 440.6V489.9L1203.9 540.8M1022.9 489.9L864.3 566.3M1203.9 491.5V540.8L1226 670" fill="none" stroke="#151515" stroke-width=".8" opacity=".55"/><ellipse cx="1045.4" cy="608.3" rx="165.4" ry="110" fill="none" stroke="#151515" stroke-width="0.8" stroke-dasharray="8 3" opacity="0.38"/><ellipse cx="1045.4" cy="613.3" rx="164.4" ry="109.3" fill="none" stroke="#151515" stroke-width="0.8" stroke-dasharray="8 3" opacity="0.25"/><ellipse cx="1045.4" cy="620.3" rx="151.4" ry="100.7" fill="none" stroke="#151515" stroke-width="0.8" stroke-dasharray="10 4" opacity="0.3"/><ellipse cx="1045.4" cy="641.5" rx="165.4" ry="110" fill="none" stroke="#151515" stroke-width="0.8" stroke-dasharray="8 3" opacity="0.38"/><ellipse cx="1045.4" cy="646.5" rx="164.4" ry="109.3" fill="none" stroke="#151515" stroke-width="0.8" stroke-dasharray="8 3" opacity="0.25"/><ellipse cx="1045.4" cy="653.5" rx="151.4" ry="100.7" fill="none" stroke="#151515" stroke-width="0.8" stroke-dasharray="10 4" opacity="0.3"/><ellipse cx="1045.4" cy="674.7" rx="165.4" ry="110" fill="none" stroke="#151515" stroke-width="0.8" stroke-dasharray="8 3" opacity="0.38"/><ellipse cx="1045.4" cy="679.7" rx="164.4" ry="109.3" fill="none" stroke="#151515" stroke-width="0.8" stroke-dasharray="8 3" opacity="0.25"/><ellipse cx="1045.4" cy="686.7" rx="151.4" ry="100.7" fill="none" stroke="#151515" stroke-width="0.8" stroke-dasharray="10 4" opacity="0.3"/><ellipse cx="1045.4" cy="707.9" rx="165.4" ry="110" fill="none" stroke="#151515" stroke-width="0.8" stroke-dasharray="8 3" opacity="0.38"/><ellipse cx="1045.4" cy="712.9" rx="164.4" ry="109.3" fill="none" stroke="#151515" stroke-width="0.8" stroke-dasharray="8 3" opacity="0.25"/><ellipse cx="1045.4" cy="719.9" rx="151.4" ry="100.7" fill="none" stroke="#151515" stroke-width="0.8" stroke-dasharray="10 4" opacity="0.3"/><ellipse cx="1045.4" cy="741.1" rx="165.4" ry="110" fill="none" stroke="#151515" stroke-width="0.8" stroke-dasharray="8 3" opacity="0.38"/><ellipse cx="1045.4" cy="746.1" rx="164.4" ry="109.3" fill="none" stroke="#151515" stroke-width="0.8" stroke-dasharray="8 3" opacity="0.25"/><ellipse cx="1045.4" cy="753.1" rx="151.4" ry="100.7" fill="none" stroke="#151515" stroke-width="0.8" stroke-dasharray="10 4" opacity="0.3"/><ellipse cx="1045.4" cy="774.3" rx="165.4" ry="110" fill="none" stroke="#151515" stroke-width="0.8" stroke-dasharray="8 3" opacity="0.38"/><ellipse cx="1045.4" cy="779.3" rx="164.4" ry="109.3" fill="none" stroke="#151515" stroke-width="0.8" stroke-dasharray="8 3" opacity="0.25"/><ellipse cx="1045.4" cy="786.3" rx="151.4" ry="100.7" fill="none" stroke="#151515" stroke-width="0.8" stroke-dasharray="10 4" opacity="0.3"/><ellipse cx="1045.4" cy="807.5" rx="165.4" ry="110" fill="none" stroke="#151515" stroke-width="0.8" stroke-dasharray="8 3" opacity="0.38"/><ellipse cx="1045.4" cy="812.5" rx="164.4" ry="109.3" fill="none" stroke="#151515" stroke-width="0.8" stroke-dasharray="8 3" opacity="0.25"/><ellipse cx="1045.4" cy="819.5" rx="151.4" ry="100.7" fill="none" stroke="#151515" stroke-width="0.8" stroke-dasharray="10 4" opacity="0.3"/><ellipse cx="1045.4" cy="840.7" rx="165.4" ry="110" fill="none" stroke="#151515" stroke-width="0.8" stroke-dasharray="8 3" opacity="0.38"/><ellipse cx="1045.4" cy="845.7" rx="164.4" ry="109.3" fill="none" stroke="#151515" stroke-width="0.8" stroke-dasharray="8 3" opacity="0.25"/><ellipse cx="1045.4" cy="852.7" rx="151.4" ry="100.7" fill="none" stroke="#151515" stroke-width="0.8" stroke-dasharray="10 4" opacity="0.3"/><ellipse cx="1045.4" cy="700" rx="120" ry="79.8" fill="none" stroke="#151515" stroke-width="0.8" stroke-dasharray="10 4" opacity="0.25"/><ellipse cx="1045.4" cy="640" rx="135" ry="89.8" fill="none" stroke="#151515" stroke-width="0.8" stroke-dasharray="10 4" opacity="0.25"/></g>
<clipPath id="cOutFace"><path d="M0 0H1920V1080H0ZM969.4 406.1A76 50.5 0 1 0 1121.4 406.1A76 50.5 0 1 0 969.4 406.1Z" clip-rule="evenodd"/></clipPath><clipPath id="cInFace"><path d="M969.4 406.1A76 50.5 0 1 0 1121.4 406.1A76 50.5 0 1 0 969.4 406.1Z"/></clipPath><path d="M1013.1 406.1L1013.1 826.9L1013.4 829.8L1014.3 832.7L1015.8 835.5L1017.8 838.1L1020.3 840.5L1023.4 842.6L1026.8 844.4L1030.5 846L1034.6 847.1L1038.8 847.9L1043.2 848.3L1047.6 848.3L1052 847.9L1056.2 847.1L1060.3 846L1064 844.4L1067.4 842.6L1070.5 840.5L1073 838.1L1075 835.5L1076.5 832.7L1077.4 829.8L1077.7 826.9L1077.7 406.1Z" fill="#b2463f" opacity=".45" clip-path="url(#cOutFace)"/><path d="M1013.1 406.1L1013.1 826.9L1013.4 829.8L1014.3 832.7L1015.8 835.5L1017.8 838.1L1020.3 840.5L1023.4 842.6L1026.8 844.4L1030.5 846L1034.6 847.1L1038.8 847.9L1043.2 848.3L1047.6 848.3L1052 847.9L1056.2 847.1L1060.3 846L1064 844.4L1067.4 842.6L1070.5 840.5L1073 838.1L1075 835.5L1076.5 832.7L1077.4 829.8L1077.7 826.9L1077.7 406.1Z" fill="#a04a6a" opacity=".16" clip-path="url(#cInFace)"/><ellipse cx="1045.4" cy="826.9" rx="32.3" ry="21.5" fill="none" stroke="#2a1616" stroke-width="1"/>

<g id="origin">
<path d="M713.300 646.700L748.400 593.800V658.900L713.300 712.200Z" fill="#f7b64a" fill-opacity=".42" stroke="#f0a838" stroke-opacity=".5" stroke-width=".800"/>
<path d="M724.400 725.600L758.900 671.100L839.600 694.400L804.400 747.800Z" fill="#f7b64a" fill-opacity=".42" stroke="#f0a838" stroke-opacity=".5" stroke-width=".800"/>
<path d="M719.600 657.800L800 681.100V746.700L719.600 723.300Z" fill="#f7b64a" fill-opacity=".42" stroke="#f0a838" stroke-opacity=".5" stroke-width=".800"/>
<path d="M708.200 644.400V673.300M708.200 678.900V687.800M708.200 691.100V723.300" stroke="#0000f0" stroke-width="2.200"/>
<path d="M711 724.400L731 694.400M733.300 691.100L735.600 687.800M739.600 681.800L753.300 661" stroke="#00dc00" stroke-width="2.400"/>
<path d="M715.600 732.200L745.600 740M751.100 742.200L758.900 744M763.300 745.600L794.400 753.300M800 755.600L806.700 757.300" stroke="#f00000" stroke-width="2.400"/>
<circle cx="708.200" cy="729.300" r="5.300" fill="#f4f4f4" fill-opacity=".85" stroke="#7a7a7a" stroke-width="1.500"/>
</g>
<g id="viewcube" font-family="Liberation Sans, sans-serif">
<defs><filter id="fVc" x="-30%" y="-30%" width="160%" height="160%"><feGaussianBlur stdDeviation="4"/></filter></defs>
<path d="M1832 232l40 12 20-30-8-6z" fill="#000" opacity=".16" filter="url(#fVc)"/>
<path d="M1822.200 189.400L1846.100 164.400L1887.800 175L1871.100 202.800Z" fill="#ececec" fill-opacity=".8" stroke="#aaa" stroke-width=".800" stroke-dasharray="3 1.500"/>
<path d="M1822.200 189.400L1871.100 202.800L1869.400 238.900L1826.100 226.700Z" fill="#e9e9e9" fill-opacity=".8" stroke="#aaa" stroke-width=".800"/>
<path d="M1871.100 202.800L1887.800 175L1884.400 207.800L1869.400 238.900Z" fill="#e2e2e2" fill-opacity=".85" stroke="#999" stroke-width=".800" stroke-dasharray="3 1.500"/>
<text transform="translate(1857.500,185.300) rotate(14) skewX(-32)" font-size="8.300" fill="#8a8f9a" text-anchor="middle" font-weight="bold" letter-spacing=".400">TOP</text>
<text transform="translate(1847,220.800) rotate(15.500) skewX(3)" font-size="8.600" fill="#8a8f9a" text-anchor="middle" font-weight="bold" letter-spacing=".600">FRONT</text>
<path d="M1820 183.900L1826.100 226.700" stroke="#4a4aff" stroke-width="2"/>
<path d="M1826.100 226.700L1877.200 243.900" stroke="#f79a9a" stroke-width="2"/>
<text x="1815.400" y="181.200" font-size="12.500" fill="#6a6aff">Z</text>
<text x="1879.600" y="250.600" font-size="12.500" fill="#ff7070">X</text>
</g>
<g id="manip">
<defs><linearGradient id="gDisc" x1="0" y1="0" x2="0" y2="1"><stop offset="0" stop-color="#8f211a"/><stop offset="1" stop-color="#76100c"/></linearGradient></defs>
<ellipse cx="1045.500" cy="406.400" rx="32.600" ry="21.600" fill="url(#gDisc)" stroke="#e4c4bc" stroke-width="1"/>
<g stroke="#fff" stroke-width="5.600" stroke-linecap="round"><path d="M1045.800 406.600L1054.300 393"/><path d="M1045.800 406.600L1065.800 412.300"/><path d="M1045.800 406.600L1036.800 420.200"/><path d="M1045.800 406.600L1024.200 400.600"/></g>
<g stroke="#222" stroke-width="1" stroke-dasharray="1.200 1.300"><path d="M1045.800 406.600L1054.300 393"/><path d="M1045.800 406.600L1065.800 412.300"/><path d="M1045.800 406.600L1036.800 420.200"/><path d="M1045.800 406.600L1024.200 400.600"/></g>
<ellipse cx="1045.800" cy="406.600" rx="9.600" ry="6.300" fill="#fff"/>
<ellipse cx="1045.800" cy="406.600" rx="7.900" ry="4.900" fill="#00aeef" stroke="#111" stroke-width="1.500"/>
<ellipse cx="1017.100" cy="417.300" rx="11.600" ry="7.600" fill="#f2f2f2" stroke="#555" stroke-width="1.600"/>
<path d="M1014.500 412.500l-4 5.200 7.500 3.400M1018 412.500l7 .3-3 5.400" stroke="#333" stroke-width="1.800" fill="none" stroke-linejoin="miter"/>
<!-- bottom arrow -->
<g stroke="#8a8a8a" stroke-width="1" fill="#f4f4f4" stroke-linejoin="round"><path d="M1012.300 825.500c0-2 6-2 6 0v11.300h5.300l-8.300 9-8.300-9h5.300z"/><path d="M1009.500 829.500h3M1018.300 829.500h3M1009.500 833h3M1018.300 833h3" fill="none"/></g>
</g>

<g id="browser" font-size="10.6">
<rect x="4.500" y="141.500" width="299" height="24" fill="#f2f2f2" stroke="#c6c6c6"/>
<path d="M13.800 150.800v6.600l-4.600-3.300zM19 150.800v6.600l-4.600-3.300z" fill="#333"/>
<text x="29.200" y="156.900" fill="#505050" font-size="10.300" textLength="51.800" lengthAdjust="spacingAndGlyphs">BROWSER</text>
<circle cx="287.300" cy="153.500" r="4.600" fill="#222"/><path d="M284.600 153.500h5.400" stroke="#f2f2f2" stroke-width="1.300"/>
<path d="M299.500 147.500v12M301.500 149v9" stroke="#777" stroke-width="1"/>
<!-- row backgrounds -->
<g fill="#f0f0f0" opacity=".92">
<rect x="40" y="171.300" width="147.500" height="19.400"/>
<rect x="58.300" y="195.300" width="133.400" height="19.400"/>
<rect x="58.300" y="219.300" width="109.400" height="19.400"/>
<rect x="58.300" y="243.300" width="94.700" height="19.400"/>
<rect x="58.300" y="267.300" width="102.400" height="19.400"/>
<rect x="75.900" y="291.300" width="90.800" height="19.400"/>
<rect x="58.300" y="315.300" width="114.300" height="19.400"/>
</g>
<!-- row1 -->
<defs><linearGradient id="gTri" x1="0" y1="0" x2="1" y2="1"><stop offset="0" stop-color="#999"/><stop offset="1" stop-color="#111"/></linearGradient>
<g id="eye"><path d="M-7.800 0c2.200-3.300 5-4.600 7.800-4.600s5.600 1.300 7.800 4.600c-2.200 3.300-5 4.600-7.800 4.600s-5.600-1.300-7.800-4.600z" fill="#9a9a9a"/><circle r="2.900" fill="#f0f0f0"/><circle r="1.600" fill="#9a9a9a"/></g>
<g id="folder"><path d="M0 -6.200h6l1.200 1.600h8.800v10.800h-16z" fill="#9a9a9a"/><path d="M0 -3.600h16" stroke="#f0f0f0" stroke-width=".700"/></g>
<g id="tri"><path d="M0 -6l8.400 6-8.400 6z" fill="#f4f4f4" stroke="#222" stroke-width="1.100" stroke-linejoin="round"/></g>
</defs>
<path d="M31.800 175.400v11h-11z" fill="url(#gTri)" stroke="#222" stroke-width=".600"/>
<use href="#eye" x="51" y="181"/>
<rect x="65.100" y="173.100" width="97.900" height="15.700" fill="#9a9a9a"/>
<path d="M68.600 177.500l3.600-3.600h11v10.800l-3.600 3.600h-11z" fill="#f2f2f6" stroke="#333" stroke-width=".900" stroke-linejoin="round"/><path d="M68.600 177.500h11v10.800M79.600 177.500l3.600-3.600" fill="none" stroke="#999" stroke-width=".700"/>
<rect x="69.200" y="178.100" width="10" height="9.700" fill="#dfe0e8"/>
<text x="98.400" y="185.200" fill="#fff" font-weight="bold" font-size="11" textLength="54.700" lengthAdjust="spacingAndGlyphs">(Unsaved)</text>
<circle cx="173.400" cy="181.500" r="5.900" fill="#fff" stroke="#222" stroke-width="1.100"/><circle cx="173.400" cy="181.500" r="2.500" fill="#222"/>
<!-- row2 -->
<use href="#tri" x="40.600" y="205.400"/>
<g transform="translate(69,204.800)"><path d="M-1.500 -8h3l.5 2.300 1.700.7 2-1.300 2.100 2.100-1.300 2 .7 1.700 2.300.5v3l-2.300.5-.7 1.700 1.300 2-2.100 2.100-2-1.300-1.700.7-.5 2.300h-3l-.5-2.300-1.700-.7-2 1.300-2.100-2.100 1.300-2-.7-1.700-2.300-.5v-3l2.300-.5.7-1.700-1.300-2 2.100-2.100 2 1.300 1.700-.7z" fill="#9a9a9a"/><circle r="2.700" fill="#f0f0f0"/></g>
<text x="91.100" y="208.900" fill="#222" textLength="89.600" lengthAdjust="spacingAndGlyphs">Document Settings</text>
<!-- row3 -->
<use href="#tri" x="40.600" y="229.400"/>
<use href="#folder" x="61" y="229"/>
<text x="91.100" y="232.900" fill="#222" textLength="67.400" lengthAdjust="spacingAndGlyphs">Named Views</text>
<!-- row4 -->
<use href="#tri" x="40.600" y="253.400"/>
<g transform="translate(68.500,253)" fill="none" stroke="#9a9a9a" stroke-width="1"><path d="M-7.500 0c2.200-3.300 5-4.400 7.500-4.400s5.300 1.100 7.500 4.400c-2.200 3.300-5 4.400-7.500 4.400s-5.300-1.100-7.500-4.400z"/><circle r="2.300"/><path d="M-5 -5l10 10"/></g>
<use href="#folder" x="86" y="253"/>
<text x="116.100" y="256.900" fill="#222" textLength="27.400" lengthAdjust="spacingAndGlyphs">Origin</text>
<!-- row5 -->
<path d="M50 271.400v11h-11z" fill="url(#gTri)" stroke="#222" stroke-width=".600"/>
<use href="#eye" x="68.500" y="277"/>
<use href="#folder" x="86" y="277"/>
<text x="116.100" y="280.900" fill="#222" textLength="32.400" lengthAdjust="spacingAndGlyphs">Bodies</text>
<path d="M82.500 284.500h76" stroke="#4f6fa8" stroke-width="3" stroke-dasharray="1.800 2.600" transform="skewX(-35) translate(199,0)" opacity=".9"/>
<!-- row6 -->
<use href="#eye" x="87" y="301"/>
<path d="M104.800 296.500c0-2.200 14.400-2.200 14.400 0v9c0 2.400-14.400 2.400-14.400 0z" fill="#f4f4f8" stroke="#333" stroke-width="1"/><path d="M104.800 296.500c0 2 14.400 2 14.400 0" fill="none" stroke="#555" stroke-width=".800"/><rect x="107" y="299.500" width="9" height="7" fill="#d9dae2"/>
<text x="134.300" y="304.900" fill="#222" textLength="22.700" lengthAdjust="spacingAndGlyphs">Barb</text>
<path d="M100.500 308.500h64" stroke="#4f6fa8" stroke-width="3" stroke-dasharray="1.800 2.600" transform="skewX(-35) translate(216,0)" opacity=".9"/>
<!-- row7 -->
<use href="#tri" x="40.600" y="325.400"/>
<use href="#eye" x="68.500" y="325"/>
<use href="#folder" x="86" y="325"/>
<text x="116.100" y="328.900" fill="#222" textLength="44.500" lengthAdjust="spacingAndGlyphs">Sketches</text>
<!-- comments -->
<rect x="4.500" y="953.500" width="299" height="24" fill="#f2f2f2" stroke="#c6c6c6"/>
<text x="29.300" y="968.600" fill="#505050" font-size="10.300" textLength="56.400" lengthAdjust="spacingAndGlyphs">COMMENTS</text>
<circle cx="287.300" cy="965" r="4.600" fill="#222"/><path d="M284.600 965h5.400M287.300 962.300v5.400" stroke="#f2f2f2" stroke-width="1.300"/>
<path d="M299.500 959v12M301.500 960.500v9" stroke="#777" stroke-width="1"/>
</g>

<g id="holepanel" font-size="10.8" fill="#2a2a2a">
<defs>
<pattern id="hatch" width="3" height="3" patternUnits="userSpaceOnUse" patternTransform="rotate(-45)"><rect width="3" height="3" fill="#d2d2d2"/><rect width="3" height="1.2" fill="#8c8c8c"/></pattern>
</defs>
<rect x="1546.500" y="261.500" width="368.500" height="579" fill="#f2f2f2" stroke="#c4c4c4"/>
<path d="M1547 285.100h368M1547 805.200h368" stroke="#c4c4c4" stroke-width="1"/>
<path d="M1548.600 268v11M1550.400 269.500v8" stroke="#666" stroke-width="1"/>
<circle cx="1562.500" cy="273.400" r="4.600" fill="#222"/><path d="M1559.800 273.400h5.400" stroke="#f2f2f2" stroke-width="1.300"/>
<text x="1571.300" y="277.300" fill="#555" font-size="10.800" textLength="26.400" lengthAdjust="spacingAndGlyphs">HOLE</text>
<path d="M1901 270.300l4.600 3.100-4.600 3.100zM1906 270.300l4.600 3.100-4.600 3.100z" fill="#222"/>
<text x="1559.400" y="304.800" textLength="48.300" lengthAdjust="spacingAndGlyphs">Placement</text>
<rect x="1641.600" y="287.700" width="23" height="26.400" rx="2" fill="#0696d7"/>
<rect x="1645.900" y="294" width="13.900" height="13.800" fill="#dcdcdc"/><circle cx="1649.500" cy="297.600" r="2" fill="#5b9bd5"/>
<rect x="1674.700" y="293.800" width="14" height="14" fill="#f4f4f4" stroke="#444" stroke-width="1"/>
<g fill="#5b9bd5"><circle cx="1678.700" cy="297.800" r="2.100"/><circle cx="1684.800" cy="297.800" r="2.100"/><circle cx="1678.700" cy="303.900" r="2.100"/><circle cx="1684.800" cy="303.900" r="2.100"/></g>
<text x="1559.400" y="334.700" textLength="23.400" lengthAdjust="spacingAndGlyphs">Face</text>
<rect x="1641.600" y="317.400" width="77.800" height="26.900" rx="2" fill="#0696d7"/>
<path d="M1649.300 323.300v12.200l2.900-2.700 2 4.600 1.900-.8-2-4.500h3.900z" fill="#e8e8e8" stroke="#333" stroke-width=".900" stroke-linejoin="round"/>
<text x="1663.700" y="334.700" fill="#fff" textLength="49.200" lengthAdjust="spacingAndGlyphs">1 selected</text>
<path d="M1731 327l7.800 7.800M1738.800 327l-7.800 7.800" stroke="#3a3a3a" stroke-width="1.700"/>
<text x="1559.400" y="364.800" textLength="50.500" lengthAdjust="spacingAndGlyphs">Reference</text>
<rect x="1642.100" y="348.100" width="41" height="26" rx="2" fill="#fff" stroke="#dadada"/>
<text x="1647.300" y="364.800" textLength="29.700" lengthAdjust="spacingAndGlyphs">Select</text>
<text x="1559.400" y="394.600" textLength="50.500" lengthAdjust="spacingAndGlyphs">Reference</text>
<rect x="1642.100" y="377.900" width="41" height="26" rx="2" fill="#fff" stroke="#dadada"/>
<text x="1647.300" y="394.600" textLength="29.700" lengthAdjust="spacingAndGlyphs">Select</text>
<path d="M1556.800 418.500h8l-4 5.900z" fill="#222"/>
<text x="1572" y="424.800" font-weight="bold" fill="#333" textLength="81.400" lengthAdjust="spacingAndGlyphs">Shape Settings</text>
<text x="1561.200" y="458.800" textLength="35.600" lengthAdjust="spacingAndGlyphs">Extents</text>
<rect x="1729.100" y="442.100" width="105" height="26" rx="2" fill="#fff" stroke="#d4d4d4"/>
<path d="M1735.300 447.200v4.300M1743.500 447.200v4.300M1735.300 457.300v4.700h8.200v-4.700" stroke="#1a2a5a" stroke-width="1.300" fill="none"/><path d="M1732.400 454.500h12.500" stroke="#222" stroke-width="1.100"/><path d="M1744.200 451.900l3.600 2.600-3.600 2.600z" fill="#222"/>
<text x="1752.200" y="458.800" textLength="12.400" lengthAdjust="spacingAndGlyphs">All</text>
<path d="M1851.300 453.300l6.500-5.300M1854.500 447.600h3.600v3.300" stroke="#666" stroke-width="1" fill="none"/><path d="M1858.800 455.500l-6.500 5.300M1855.600 461.200h-3.600v-3.300" stroke="#1b8fe0" stroke-width="1" fill="none"/>
<text x="1561.200" y="497" textLength="46.700" lengthAdjust="spacingAndGlyphs">Hole Type</text>
<text x="1561.200" y="527.100" textLength="66.500" lengthAdjust="spacingAndGlyphs">Hole Tap Type</text>
<text x="1561.200" y="557" textLength="42.800" lengthAdjust="spacingAndGlyphs">Drill Point</text>
<g fill="#0696d7"><rect x="1728.600" y="479.800" width="22.800" height="26.200" rx="1.500"/><rect x="1728.600" y="509.900" width="22.800" height="26.200" rx="1.500"/><rect x="1728.600" y="540" width="22.800" height="26.200" rx="1.500"/></g>
<!-- hole type icons: each 15x16 at (x,485.2) -->
<g id="hi1" transform="translate(1732,485.200)"><rect width="15.200" height="15.800" fill="url(#hatch)"/><path d="M3.200 0h8.800v8.500l-4.400 4.300-4.400-4.300z" fill="#444"/><path d="M0 .5h3.200M12 .5h3.200M0 15.300h15.200" stroke="#333" stroke-width="1"/></g>
<g transform="translate(1761.100,485.200)"><rect width="15" height="15.800" fill="url(#hatch)"/><path d="M.5 0h14v4.200h-3.300v11.600h-7.400v-11.600h-3.300z" fill="#444"/><path d="M0 15.300h15" stroke="#333" stroke-width="1"/></g>
<g transform="translate(1790,485.200)"><rect width="15" height="15.800" fill="url(#hatch)"/><path d="M.5 0h14l-3.300 5.200v10.600h-7.400v-10.600z" fill="#444"/><path d="M0 15.300h15" stroke="#333" stroke-width="1"/></g>
<g transform="translate(1732,515.300)"><rect width="15.200" height="15.800" fill="url(#hatch)"/><path d="M3.200 0h8.800v15.800h-8.800z" fill="#444"/><path d="M0 .5h15.200M0 15.300h15.200" stroke="#333" stroke-width="1"/></g>
<g transform="translate(1761.100,515.300)"><rect width="15" height="15.800" fill="url(#hatch)"/><path d="M3.200 0h8.600v15.800h-8.600z" fill="#444"/><rect x="5.400" y="0" width="4.200" height="10.500" fill="#c8c8c8"/><path d="M0 .5h3.200M11.800 .5h3.200M0 15.300h15" stroke="#333" stroke-width="1"/></g>
<g transform="translate(1790,515.300)"><rect width="15" height="15.800" fill="url(#hatch)"/><path d="M3 0v15.800M12 0v15.800M3 2.800l9-1.600M3 5.800l9-1.600M3 8.800l9-1.600M3 11.800l9-1.600M3 14.800l9-1.600" stroke="#444" stroke-width="1" fill="none"/><path d="M0 .5h15M0 15.300h15" stroke="#333" stroke-width="1"/></g>
<g transform="translate(1819,515.300)"><rect width="15" height="15.800" fill="url(#hatch)"/><path d="M.5 0h14l-4 9v6.800h-6v-6.800z" fill="#444"/><path d="M3 3h9M4 6h7" stroke="#c8c8c8" stroke-width=".800"/><path d="M0 15.300h15" stroke="#333" stroke-width="1"/></g>
<g transform="translate(1732,545.400)"><rect width="15.200" height="15.800" fill="url(#hatch)"/><path d="M3.200 0h8.800v11.500h-8.800z" fill="#444"/><path d="M0 .5h3.200M12 .5h3.200M0 15.300h15.200" stroke="#333" stroke-width="1"/></g>
<g transform="translate(1761.100,545.400)"><rect width="15" height="15.800" fill="url(#hatch)"/><path d="M3.200 0h8.600v8.500l-4.300 4.300-4.300-4.300z" fill="#444"/><path d="M0 .5h3.200M11.800 .5h3.200M0 15.300h15" stroke="#333" stroke-width="1"/></g>
<!-- diagram -->
<path d="M1738 594.500h-152.400v46" stroke="#8a8a8a" stroke-width="1.100" fill="none"/>
<rect x="1738.500" y="584" width="119" height="22.500" fill="#fff" stroke="#c8c8c8"/>
<text x="1741.400" y="598.900" textLength="19.600" lengthAdjust="spacingAndGlyphs">(All)</text>
<path d="M1572.800 643.800h27.600M1572.800 735.900h27.600M1605.800 742v14.800M1650.100 742v14.800" stroke="#f03030" stroke-width="1.100"/>
<path d="M1585.600 649v82M1611 750.100h34" stroke="#4a7eb5" stroke-width="1.300"/>
<path d="M1585.600 645.300l3 5.700h-6zM1585.600 734.500l3-5.700h-6zM1607.300 750.100l5.700-3v6zM1648.600 750.100l-5.700-3v6z" fill="#4a7eb5"/>
<rect x="1606.800" y="644.200" width="42.300" height="92" rx="2" fill="#c9c9c9" stroke="#989898" stroke-width="2"/>
<path d="M1654 749.800h84" stroke="#8a8a8a" stroke-width="1.100"/>
<rect x="1738.500" y="738.500" width="119" height="22.500" fill="#fff" stroke="#c8c8c8"/>
<rect x="1740.900" y="743.400" width="40" height="13.400" fill="#0a64d8"/>
<text x="1741.400" y="753.800" fill="#fff" textLength="39" lengthAdjust="spacingAndGlyphs">3.00 mm</text>
<g fill="#777"><circle cx="1868.100" cy="744.500" r="1.200"/><circle cx="1868.100" cy="749.600" r="1.200"/><circle cx="1868.100" cy="754.700" r="1.200"/></g>
<path d="M1556.100 784.800v8l5.900-4z" fill="#222"/>
<text x="1570.900" y="793.100" font-weight="bold" fill="#333" textLength="80" lengthAdjust="spacingAndGlyphs">Objects To Cut</text>
<circle cx="1561" cy="823.700" r="5.700" fill="#111"/><path d="M1561 822.800v4" stroke="#fff" stroke-width="1.700"/><circle cx="1561" cy="820.600" r="1" fill="#fff"/>
<rect x="1774.700" y="814.800" width="58.500" height="18" fill="#e4e4e4" stroke="#b4b4b4"/>
<text x="1803.900" y="827.800" font-size="11.600" text-anchor="middle" fill="#333">OK</text>
<rect x="1844.500" y="814.800" width="59" height="18" fill="#e4e4e4" stroke="#b4b4b4"/>
<text x="1874" y="827.800" font-size="11.600" text-anchor="middle" fill="#333">Cancel</text>
</g>
<g id="notif" font-size="10.800">
<rect x="752.800" y="140.900" width="415" height="23.800" fill="#f2f2f2"/>
<path d="M1032.800 142v21.600" stroke="#dcdcdc" stroke-width="1.400"/>
<path d="M760.700 151.500v-2.300a3.300 3.300 0 0 1 6.600 0v2.300" stroke="#e02020" stroke-width="1.700" fill="none"/><rect x="758" y="150.800" width="12" height="8.800" rx="1" fill="#e02020"/><rect x="763.400" y="153.300" width="1.200" height="3.300" fill="#f6c0c0"/>
<text x="778.600" y="157.300" font-weight="bold" fill="#333" textLength="57.800" lengthAdjust="spacingAndGlyphs">Read-Only:</text>
<text x="858.100" y="157.300" fill="#333" textLength="158.600" lengthAdjust="spacingAndGlyphs">Document limit has been reached</text>
<text x="1046.700" y="157.300" fill="#1b7fc4" textLength="109.900" lengthAdjust="spacingAndGlyphs">My Editable Documents</text>
</g>
<g id="allinput" font-size="10.800">
<rect x="1165.300" y="446.100" width="106.300" height="21.400" fill="#efefef"/>
<path d="M1170.500 448v18M1173.500 448v18" stroke="#c8c8c8" stroke-width="1" stroke-dasharray="1 1"/>
<rect x="1179.500" y="447.900" width="68" height="18.400" fill="#fff" stroke="#b8b8b8"/>
<text x="1213.200" y="461.300" text-anchor="middle" fill="#333">(All)</text>
<g fill="#666"><circle cx="1260.300" cy="452" r="1.300"/><circle cx="1260.300" cy="457" r="1.300"/><circle cx="1260.300" cy="462" r="1.300"/></g>
</g>
<g id="navbar">
<rect x="841.200" y="954.200" width="236.300" height="23.200" fill="#f2f2f2"/>
<g fill="#333"><path d="M865.400 964.100h5.500l-2.750 3.500z"/><path d="M976.100 964.100h5.500l-2.750 3.500z"/><path d="M1006.500 964.100h5.500l-2.750 3.500z"/><path d="M1037.200 964.100h5.500l-2.750 3.500z"/><path d="M1067.900 964.100h5.500l-2.750 3.500z"/></g>
<!-- orbit -->
<path d="M852.700 960.500v12.500" stroke="#222" stroke-width="2.600"/><path d="M852.700 960.500v12.500" stroke="#f2f2f2" stroke-width="1"/>
<path d="M852.700 957.600l3 3.600h-6z" fill="#f2f2f2" stroke="#222" stroke-width=".900"/>
<path d="M849.500 964.600c-3 .6-5 1.600-5 2.800 0 1.200 1.600 2.200 4 2.800M856 964.600c2.500.6 3.800 1.600 3.800 2.800 0 1.500-2.600 2.700-6 3" stroke="#222" stroke-width="1.100" fill="none"/><path d="M846.600 968.600l2.600 3.600-4.200.4z" fill="#222"/>
<!-- look at -->
<path d="M877.500 963.600h15v9.400h-15z" fill="#e8e8ee" stroke="#333" stroke-width="1"/><path d="M879 963.400l3.600-4.600 1.600 2.200 3.800-2.200 2 1.600 1 3" fill="#aab" stroke="#333" stroke-width=".900"/><rect x="880" y="966.300" width="10" height="4" fill="#99a" stroke="#333" stroke-width=".800"/>
<!-- hand -->
<path d="M906.500 966.500l-2.300-1.800c-1-.6-1.700.4-1 1.300l4.200 5.700c.7.900 1.500 1.500 3 1.500h3.600c1.600 0 2.600-1 2.800-2.500l.8-6.500c.1-1.100-1.400-1.300-1.600-.2l-.6 3.200.1-6c0-1.200-1.600-1.200-1.700 0l-.3 5.300-.5-6.300c-.1-1.200-1.700-1.100-1.700.1l.1 6.300-1-5.300c-.2-1.100-1.800-.9-1.600.3l1 7.500z" fill="#fafafa" stroke="#333" stroke-width=".900" stroke-linejoin="round"/>
<!-- zoom -->
<circle cx="934.600" cy="965" r="5" fill="#d9ecec" stroke="#333" stroke-width="1.100"/><path d="M938.200 968.800l4.200 4.200" stroke="#333" stroke-width="2.400"/><path d="M940.800 961.200h4.400M943 959v4.400M940.800 966.200h4.400" stroke="#222" stroke-width="1"/>
<!-- zoom window -->
<rect x="955.600" y="958.600" width="14.600" height="14.600" fill="none" stroke="#333" stroke-width="1" stroke-dasharray="2 1.600"/><circle cx="962.200" cy="964.800" r="5.600" fill="#dcebeb" stroke="#333" stroke-width="1.100"/><path d="M966.300 969l4.300 4.300" stroke="#333" stroke-width="2.600"/>
<!-- monitor -->
<rect x="988.700" y="958.800" width="14.600" height="11" rx="1" fill="#f4f4f4" stroke="#333" stroke-width="1.100"/><rect x="990.600" y="960.600" width="10.800" height="7.300" fill="#8fb2e0" stroke="#4a6ea8" stroke-width=".600"/><path d="M994.500 970v2h-2.500v1.300h8v-1.300h-2.500v-2" fill="#ddd" stroke="#555" stroke-width=".700"/>
<!-- grid -->
<defs><linearGradient id="gGridIc" x1="0" y1="0" x2="0" y2="1"><stop offset="0" stop-color="#f4f4f4"/><stop offset="1" stop-color="#8e95ad"/></linearGradient></defs>
<rect x="1019.700" y="958.700" width="14.600" height="14.600" fill="url(#gGridIc)" stroke="#333" stroke-width="1"/><path d="M1022.600 958.700v14.600M1025.500 958.700v14.600M1028.400 958.700v14.600M1031.300 958.700v14.600M1019.700 961.600h14.600M1019.700 964.500h14.600M1019.700 967.400h14.600M1019.700 970.300h14.600" stroke="#444" stroke-width=".700"/>
<!-- viewports -->
<g fill="#a8c2ea" stroke="#3b5fa5" stroke-width="1.200"><rect x="1050.400" y="959.400" width="6.600" height="5.800" rx=".800"/><rect x="1058.200" y="959.400" width="6.600" height="5.800" rx=".800"/><rect x="1050.400" y="966.600" width="6.600" height="5.800" rx=".800"/><rect x="1058.200" y="966.600" width="6.600" height="5.800" rx=".800"/></g>
</g>
<text x="1752.600" y="969.700" font-size="10.800" font-weight="bold" fill="#222" textLength="147" lengthAdjust="spacingAndGlyphs">1 Face | Area : 31.416 mm^2</text>

</svg>
</div>
<div id="timeline"></div>
<svg id="tlsvg" width="1920" height="50" viewBox="0 983 1920 50" style="left:0;top:983px">
<defs>
<g id="tCyl"><path d="M-8.100 -5.500v11c0 3.200 16.200 3.200 16.200 0v-11z" fill="#6cb0e4"/><ellipse cx="0" cy="-5.500" rx="8.100" ry="2.600" fill="#8ac8f8"/></g>
<g id="tExt"><path d="M-8 4.600h10.600v2.600h-10.600z" fill="#c2c2c2"/><path d="M2.600 4.600l2.800-2.600v2.600l-2.800 2.600z" fill="#a2a2a2"/><path d="M-8 -5.500h10.600v10.100h-10.600z" fill="#6cb0e4"/><path d="M-8 -5.500l2.800-2.600h10.600l-2.800 2.600z" fill="#8ac8f8"/><path d="M2.600 -5.500l2.800-2.600v10.100l-2.800 2.600z" fill="#4a94cf"/><path d="M7.300 4.500v-10" stroke="#222" stroke-width="1"/><path d="M7.300 -7.800l1.600 2.900h-3.200z" fill="#222"/></g>
<g id="tCha"><path d="M-4.200 -7.800h8.200c2.400 0 4 1.600 4 4v11.400h-12.400l-3.700-4.400v-5.600z" fill="#dcdcdc" stroke="#555" stroke-width="1" stroke-linejoin="round"/><path d="M-4.200 -7.600h7.700c2.400 0 4 1.600 4 4l-11.500 7.800-3.600-3.400v-2z" fill="#f1f1f1"/><path d="M-7.600 -1.600l5.600-5.900 3.300 2.900-5.600 6.100z" fill="#5fa8e0"/></g>
<g id="tCom"><path d="M-3 -5.200h8.600v8.400h-8.600z" fill="#6cb0e4"/><path d="M-3 -5.200l2-2.600h8.600l-2 2.600z" fill="#8ac8f8"/><path d="M5.600 -5.200l2-2.600v8.400l-2 2.600z" fill="#4a94cf"/><path d="M-8 -.6h8.600v8.400h-8.600z" fill="#6cb0e4"/><path d="M-8 -.6l2-2.400h3v2.400z" fill="#8ac8f8"/><path d="M.6 3.200h2v2.400l-2 2.200z" fill="#4a94cf"/></g>
<g id="tCoil"><rect x="-5.200" y="-7.500" width="10.400" height="15" fill="none" stroke="#9a9a9a" stroke-width="1.100"/><path d="M-7.500 -1.600l15-3.600M-7.500 1.400l15-3.600M-7.500 4.400l15-3.600" stroke="#f2f2f2" stroke-width="2.400"/><path d="M-7.500 -1.600l15-3.600M-7.500 1.400l15-3.600M-7.500 4.400l15-3.600" stroke="#2f8fe0" stroke-width="1.100"/></g>
<g id="tShell"><path d="M-2 -5l2.600-2.600h7.600v7.200l-2.400 2.600z" fill="#4a94cf"/><path d="M-2 -5l2.600-2.600h7.600l-2.400 2.600z" fill="#8ac8f8"/><rect x="-7.500" y="-4.400" width="12.300" height="12.100" fill="#f2f2f2" stroke="#444" stroke-width="1.100"/><rect x="-5" y="-2" width="7.300" height="7.300" fill="none" stroke="#444" stroke-width="1.100"/></g>
<g id="tFil"><path d="M-4 -7.600h3c5 0 9 4 9 9v2.800l-3.200 3.400h-12.600v-11.400z" fill="#dcdcdc" stroke="#555" stroke-width="1" stroke-linejoin="round"/><path d="M.5 -7.600c4.500.5 7.500 4 7.500 8.600l-2.700 2.400c-.2-4.600-3-7.800-7.800-8z" fill="#5fa8e0"/><path d="M5 4.400l3-2.800v2.600l-3 3.400z" fill="#b5b5b5"/></g>
<g id="tSk"><path d="M-5.400 -6.800h9.600M-6.600 -5.400v9.600M5.500 -5.400v4M-5.400 5.600h6" stroke="#444" stroke-width="1" fill="none"/><rect x="-7.700" y="-7.900" width="2.200" height="2.200" fill="#1b8fe0"/><rect x="4.400" y="-7.900" width="2.200" height="2.200" fill="#1b8fe0"/><rect x="-7.700" y="4.500" width="2.200" height="2.200" fill="#1b8fe0"/><path d="M2.600 5l4.600-5.400 1.900 1.600-4.600 5.400z" fill="#f5b83a"/><path d="M7.200 -.4l.9-1c.7-.8 2.600.8 1.900 1.600l-.9 1z" fill="#f03030"/><path d="M2.600 5l-1 2.800 2.900-1.200z" fill="#666"/></g>
<g id="tMove"><path d="M0 -5v10M-5 0h10" stroke="#222" stroke-width="1.300"/><path d="M0 -7.800l2.700 3.400h-5.400zM0 7.800l2.700-3.400h-5.400zM-7.800 0l3.400-2.700v5.400zM7.800 0l-3.400-2.700v5.400z" fill="#222"/></g>
</defs>
<g fill="#444">
<rect x="10.900" y="1001.200" width="1.500" height="13.600"/><path d="M23.400 1001.200v13.600l-10.100-6.800z"/>
<path d="M45 1002v12l-9.800-6z"/><rect x="46.300" y="1004.600" width="1.700" height="6.800"/>
<path d="M61 999.600v16.400l11.800-8.200z"/>
<rect x="84.800" y="1004.600" width="1.700" height="6.800"/><path d="M88.200 1002v12l9.800-6z"/>
<path d="M111 1001.200v13.600l10-6.800z"/><rect x="121.300" y="1001.200" width="1.500" height="13.600"/>
</g>
<path d="M154.300 1024.200H562.900M154.3 1018v6.200M178.3 1018v6.200M202.3 1018v6.200M226.3 1018v6.200M250.3 1018v6.200M274.3 1018v6.200M298.3 1018v6.200M322.3 1018v6.200M346.3 1018v6.200M370.3 1018v6.200M394.3 1018v6.200M418.3 1018v6.200M442.3 1018v6.200M466.3 1018v6.200M490.3 1018v6.200M514.3 1018v6.200M538.3 1018v6.200M562.3 1018v6.200" stroke="#c8c8c8" stroke-width="1.500" fill="none"/>
<use href="#tCyl" x="154.0" y="1006.900"/>
<use href="#tCyl" x="178.0" y="1006.900"/>
<use href="#tExt" x="201.3" y="1006.900"/>
<use href="#tExt" x="225.3" y="1006.900"/>
<use href="#tCha" x="250.0" y="1006.900"/>
<use href="#tCha" x="274.0" y="1006.900"/>
<use href="#tCha" x="298.0" y="1006.900"/>
<use href="#tCom" x="322.0" y="1006.900"/>
<use href="#tCyl" x="346.0" y="1006.900"/>
<use href="#tCoil" x="370.0" y="1006.900"/>
<use href="#tShell" x="394.0" y="1006.900"/>
<use href="#tShell" x="418.0" y="1006.900"/>
<use href="#tFil" x="442.0" y="1006.900"/>
<use href="#tSk" x="466.0" y="1006.900"/>
<use href="#tExt" x="489.3" y="1006.900"/>
<use href="#tMove" x="514.0" y="1006.900"/>
<use href="#tMove" x="538.0" y="1006.900"/>
<use href="#tCom" x="562.0" y="1006.900"/>
<path d="M315 994.800l3.600-4.600M320.500 994.800l3.600-4.600M326 994.800l3.600-4.600" stroke="#444" stroke-width="1.500"/>
<path d="M568 993.100h12v2.400l-5 6.300v23h-2v-23l-5-6.300z" fill="#666"/>
<g transform="translate(1899,1008)"><path d="M-1.500 -8h3l.5 2.300 1.700.7 2-1.300 2.100 2.100-1.300 2 .7 1.700 2.300.5v3l-2.300.5-.7 1.700 1.300 2-2.100 2.100-2-1.300-1.700.7-.5 2.300h-3l-.5-2.300-1.700-.7-2 1.300-2.100-2.100 1.300-2-.7-1.700-2.300-.5v-3l2.300-.5.7-1.700-1.300-2 2.100-2.100 2 1.300 1.700-.7z" fill="#888"/><circle r="2.800" fill="#f2f2f2"/></g>
</svg>
<div id="taskbar"></div>
<svg id="tasksvg" width="1920" height="48" viewBox="0 1032 1920 48" style="left:0;top:1032px" font-family="Liberation Sans, sans-serif">
<defs>
<linearGradient id="gWin" x1="0" y1="0" x2="1" y2="1"><stop offset="0" stop-color="#6fdcff"/><stop offset="1" stop-color="#1498e4"/></linearGradient>
<linearGradient id="gTv" x1="0" y1="0" x2="1" y2="1"><stop offset="0" stop-color="#ffffff"/><stop offset="1" stop-color="#c9c9c9"/></linearGradient>
<linearGradient id="gTeams" x1="0" y1="0" x2="1" y2="1"><stop offset="0" stop-color="#8b83e6"/><stop offset="1" stop-color="#5a4fc0"/></linearGradient>
<linearGradient id="gFold" x1="0" y1="0" x2="0" y2="1"><stop offset="0" stop-color="#ffd966"/><stop offset="1" stop-color="#f4b92c"/></linearGradient>
<linearGradient id="gEdge" x1="0" y1="0" x2="1" y2="1"><stop offset="0" stop-color="#2fc7d6"/><stop offset=".5" stop-color="#1b8fd6"/><stop offset="1" stop-color="#1558b0"/></linearGradient>
<linearGradient id="gAtom" x1="0" y1="0" x2="0" y2="1"><stop offset="0" stop-color="#66c28a"/><stop offset="1" stop-color="#3b9a66"/></linearGradient>
</defs>
<!-- start -->
<g fill="url(#gWin)"><rect x="596.800" y="1044.800" width="11.200" height="11"/><rect x="609.100" y="1044.800" width="11.200" height="11"/><rect x="596.800" y="1056.800" width="11.200" height="11"/><rect x="609.100" y="1056.800" width="11.200" height="11"/></g>
<!-- search -->
<path d="M648.500 1060.500l-5 6" stroke="#cfcfcf" stroke-width="3" stroke-linecap="round"/><circle cx="654.200" cy="1053.800" r="8.200" fill="#454545" stroke="#dedede" stroke-width="2.400"/>
<!-- task view -->
<rect x="685" y="1050.800" width="17.800" height="15.800" rx="1.500" fill="#6e6e6e"/><rect x="690.900" y="1044.800" width="18.200" height="15.900" rx="1.500" fill="url(#gTv)"/>
<!-- widgets -->
<rect x="728.900" y="1044.800" width="24" height="22.200" rx="1.500" fill="#1464c0"/><rect x="731" y="1047" width="8.600" height="17.800" rx="1" fill="#f4f8ff"/><rect x="741.200" y="1047" width="9.600" height="9.500" fill="#66c8ff"/><rect x="741.200" y="1057.700" width="9.600" height="3.200" fill="#3aa0f0"/><rect x="741.200" y="1061.800" width="9.600" height="3" fill="#2d8be0"/>
<!-- chat -->
<circle cx="785.300" cy="1055.400" r="11.400" fill="url(#gTeams)"/><path d="M776 1063l-2.500 4.500 6-1.800z" fill="#6a60cc"/><rect x="778.600" y="1051.400" width="9.500" height="8" rx="1.500" fill="#fff"/><path d="M789 1054.600l3.400-2.300v6.400l-3.400-2.300z" fill="#fff"/>
<!-- explorer -->
<path d="M817 1047.200c0-.9.700-1.600 1.600-1.600h6.400l2 2.300h12.800c.9 0 1.600.7 1.600 1.600v15.500c0 .9-.7 1.600-1.600 1.600h-21.200c-.9 0-1.600-.7-1.600-1.600z" fill="#e9a820"/><rect x="817" y="1049.600" width="24.400" height="17" rx="1.600" fill="url(#gFold)"/><rect x="822.300" y="1059.600" width="13.800" height="7" rx="1.500" fill="#1b7fd8"/><rect x="824.300" y="1061.300" width="9.800" height="1.600" rx=".800" fill="#3fa0f0"/>
<rect x="826" y="1072.300" width="6" height="2.200" rx="1.100" fill="#8a8a8a"/>
<!-- whatsapp -->
<circle cx="872.300" cy="1056.300" r="10.600" fill="#fff"/><circle cx="872.300" cy="1056.300" r="9.200" fill="#2fc45a"/><path d="M863.300 1066.600l1.600-5.400 3.600 3.400z" fill="#fff"/><path d="M868.200 1052c.5-1 1.300-1 1.800-.3l1 1.700c.2.500 0 .9-.4 1.300l-.5.600c.8 1.500 1.900 2.600 3.400 3.400l.7-.6c.4-.4.800-.5 1.300-.3l1.700 1c.7.500.6 1.300-.3 1.900-2.800 1.800-10.400-4.500-8.700-8.700z" fill="#fff"/>
<circle cx="882" cy="1047.400" r="7.600" fill="#e81123"/><text x="882" y="1051.600" font-size="11.500" fill="#fff" text-anchor="middle">1</text>
<rect x="870" y="1072.300" width="6" height="2.200" rx="1.100" fill="#8a8a8a"/>
<!-- edge -->
<circle cx="917.200" cy="1056" r="11.800" fill="url(#gEdge)"/><path d="M906 1052c2-6.500 9-9 14.500-6.500 5 2.300 7.500 6.500 8.300 10.500-1.500-3-5-5.500-9.500-5.500-6 0-9.500 4-9.500 8.500-2.500-1.500-4.500-4-3.800-7z" fill="#58d67c" opacity=".85"/><path d="M912 1060c0-4 3-6.500 6.500-6.500 3 0 5 1.500 5 3.500 0 1.500-1 2.500-1 2.500 3 0 6-1 6.500-3.500 0 6.500-5 12-11 12-3.500 0-6-3.500-6-8z" fill="#1446a0" opacity=".9"/>
<!-- terminal -->
<rect x="948.800" y="1046.700" width="23" height="17.800" fill="#0c0c0c" stroke="#8a8a8a" stroke-width="1"/><rect x="949.300" y="1047.200" width="22" height="2.600" fill="#b8b8b8"/><text x="951" y="1055.600" font-size="5" fill="#eee" font-family="Liberation Mono, monospace">C:\_</text>
<!-- xampp -->
<rect x="993.100" y="1044.200" width="24" height="23.800" rx="3" fill="#f37a1f"/><path d="M998.500 1050.500c1.600-1.600 4-1.600 5.200 0l1.400 1.600 1.400-1.600c1.400-1.600 3.800-1.600 5.200 0 1.500 1.600 1.200 3.700 0 5 1.200 1.300 1.500 3.600 0 5.200-1.400 1.500-3.800 1.500-5.200 0l-1.400-1.600-1.400 1.600c-1.400 1.500-3.800 1.500-5.200 0-1.500-1.600-1.200-3.900 0-5.200-1.200-1.300-1.500-3.400 0-5z" fill="none" stroke="#fff" stroke-width="2.200"/>
<!-- chrome -->
<circle cx="1048.800" cy="1055.600" r="11.500" fill="#e33b2e"/><path d="M1048.800 1055.600l-10-5.700a11.500 11.500 0 0 0 4.700 15.900z" fill="#2da94f"/><path d="M1048.800 1055.600l-5.300 10.200a11.500 11.500 0 0 0 16.800-10.200z" fill="#fdbd00"/><path d="M1038.800 1049.900a11.500 11.500 0 0 1 20.700 1.500h-10.700z" fill="#e33b2e"/><circle cx="1048.800" cy="1055.600" r="5.400" fill="#fff"/><circle cx="1048.800" cy="1055.600" r="4.200" fill="#3f86f0"/>
<rect x="1046" y="1072.300" width="6" height="2.200" rx="1.100" fill="#8a8a8a"/>
<!-- atom -->
<circle cx="1093.100" cy="1055.600" r="11.900" fill="url(#gAtom)"/><g fill="none" stroke="#fff" stroke-width="1"><ellipse cx="1093.100" cy="1056" rx="8.500" ry="3.400" transform="rotate(60 1093.100 1056)"/><ellipse cx="1093.100" cy="1056" rx="8.500" ry="3.400" transform="rotate(-60 1093.100 1056)"/><ellipse cx="1093.100" cy="1056" rx="8.500" ry="3.400"/></g><circle cx="1093.100" cy="1056" r="1.300" fill="#fff"/>
<!-- box -->
<path d="M1137 1044l11.500 5v13.500l-11.500 5.600-11.500-5.600v-13.500z" fill="#1c62d0"/><path d="M1137 1044l11.500 5-11.500 5-11.500-5z" fill="#3b86ee"/><path d="M1137 1054l11.500-5v13.500l-11.500 5.600z" fill="#154aa6"/><path d="M1137 1047.800l5.800 2.500v6.200l-5.800 2.700-5.800-2.700v-6.200z" fill="#f0932b"/><path d="M1137 1047.800l5.800 2.500-5.800 2.500-5.800-2.500z" fill="#f7b05a"/><path d="M1125.500 1055.700l11.500 5.400 11.500-5.400M1137 1054v14M1131.200 1051.500v13.800M1142.800 1051.500v13.800" stroke="#0d2f70" stroke-width=".700" fill="none"/>
<!-- slack -->
<circle cx="1181" cy="1055.600" r="11.700" fill="#f5f5f5"/>
<g stroke-width="2.700" stroke-linecap="round"><path d="M1178.300 1049.500v5" stroke="#36c5f0"/><path d="M1174.800 1053.300h.100" stroke="#36c5f0"/><path d="M1182.200 1052.900h5" stroke="#2eb67d"/><path d="M1183.700 1049.300v.100" stroke="#2eb67d"/><path d="M1183.700 1056.800v5" stroke="#ecb22e"/><path d="M1187.200 1058h.100" stroke="#ecb22e"/><path d="M1174.800 1058.300h5" stroke="#e01e5a"/><path d="M1178.300 1061.800v.100" stroke="#e01e5a"/></g>
<!-- inkscape -->
<defs><linearGradient id="gInk" x1="0" y1="0" x2="1" y2=".6"><stop offset="0" stop-color="#ffffff"/><stop offset=".45" stop-color="#c9d0dc"/><stop offset="1" stop-color="#2f62ad"/></linearGradient></defs>
<path d="M1224.400 1044.700l10.600 10.200c.4.500.2 1-.4 1.200l-5.200 1.600-1.200 3.600-2.400 1.200-1.200 3.600-1.800-3.200-3.400-.4 1.800-2-5-1.800c-1.600-.5-2-1.300-1.400-2z" fill="url(#gInk)"/>
<path d="M1221.500 1052.500c1.500-1.500 3-.5 4.500.3 1.300.7 2.400.3 3.300 1.300.8.900-.2 2-1.500 2.400l-3.500 1.600-3.600-1.200c-1.400-.6-.6-3 .8-4.400z" fill="#0a0a0a"/>
<path d="M1219 1058.800h7M1217.500 1062.300h3M1229.500 1061.500h1.500" stroke="#0a0a0a" stroke-width="1"/>
<!-- fusion active -->
<rect x="1253" y="1036.800" width="35.300" height="39.500" rx="4" fill="#2b2b2b" stroke="#3a3a3a" stroke-width="1"/>
<rect x="1249.400" y="1036.300" width="35.600" height="40" rx="4" fill="#2d2d2d" stroke="#3c3c3c" stroke-width="1"/>
<rect x="1256.700" y="1044.200" width="24.600" height="23.800" fill="#f8e6d2"/><path d="M1263.800 1048.600c0-1 .8-1.800 1.800-1.800h8.800v4h-5.600v3.700h4.600v3.900h-4.600v7h-5z" fill="#e8882c"/><path d="M1263.800 1048.600c0-1 .8-1.800 1.800-1.800h2v18.600h-3.800z" fill="#c96a18"/><rect x="1274" y="1063.400" width="5.600" height="2.600" fill="#f1b880"/>
<rect x="1260.800" y="1072.300" width="16.200" height="3" rx="1.500" fill="#4cc2ff"/>
<!-- settings -->
<g transform="translate(1313,1055.900)" fill="#7d8896"><circle r="9.300"/><rect x="-3.600" y="-12.300" width="7.200" height="7" rx="1.600" transform="rotate(30)"/><rect x="-3.600" y="-12.300" width="7.200" height="7" rx="1.600" transform="rotate(90)"/><rect x="-3.600" y="-12.300" width="7.200" height="7" rx="1.600" transform="rotate(150)"/><rect x="-3.600" y="-12.300" width="7.200" height="7" rx="1.600" transform="rotate(210)"/><rect x="-3.600" y="-12.300" width="7.200" height="7" rx="1.600" transform="rotate(270)"/><rect x="-3.600" y="-12.300" width="7.200" height="7" rx="1.600" transform="rotate(330)"/><circle r="6.300" fill="#f2f4f8"/><circle r="4.400" fill="#1565c8"/></g>
<rect x="1310" y="1072.300" width="6" height="2.200" rx="1.100" fill="#8a8a8a"/>
<!-- tray -->
<path d="M1668.300 1059.200l5.750-6.500 5.750 6.500" stroke="#f0f0f0" stroke-width="1.300" fill="none"/>
<g stroke="#f0f0f0" stroke-width="1.100" fill="none"><path d="M1698.400 1056a7.200 7.200 0 0 1 12.600-4.600"/><path d="M1711.600 1048.500v3.300h-3.300"/><path d="M1712.600 1056a7.200 7.200 0 0 1-12.600 4.600"/><path d="M1699.400 1063.500v-3.300h3.300"/></g>
<circle cx="1710.200" cy="1060.200" r="4.300" fill="#ff9a0a"/>
<g fill="#f4f4f4" font-size="11.300">
<text x="1744.100" y="1052.500" text-anchor="middle" textLength="22.800" lengthAdjust="spacingAndGlyphs">ENG</text>
<text x="1744.100" y="1068.300" text-anchor="middle" textLength="14.400" lengthAdjust="spacingAndGlyphs">US</text>
<text x="1904.500" y="1051.800" text-anchor="end" textLength="42.500" lengthAdjust="spacingAndGlyphs">8:38 PM</text>
<text x="1904.500" y="1068" text-anchor="end" textLength="50.900" lengthAdjust="spacingAndGlyphs">2/11/2022</text>
</g>
<g stroke="#f0f0f0" stroke-width="1.200" fill="none" stroke-linecap="round"><path d="M1774.400 1053.300a10.500 10.500 0 0 1 15 0M1776.900 1056a7 7 0 0 1 10 0M1779.300 1058.600a3.500 3.500 0 0 1 5.200 0"/></g><circle cx="1781.900" cy="1060.300" r="1.100" fill="#f0f0f0"/>
<path d="M1798.500 1054h2.800l3.700-3.300v10.600l-3.700-3.300h-2.800z" stroke="#f0f0f0" stroke-width="1.100" fill="none" stroke-linejoin="round"/><path d="M1807.300 1053.300a3.800 3.800 0 0 1 0 5.400M1809.600 1051.200a6.800 6.800 0 0 1 0 9.600" stroke="#f0f0f0" stroke-width="1.100" fill="none"/><path d="M1812 1049.500a9.500 9.500 0 0 1 0 13" stroke="#777" stroke-width="1" fill="none"/>
<rect x="1826" y="1052" width="11" height="8" rx="1.500" stroke="#f0f0f0" stroke-width="1.100" fill="none"/><rect x="1827.600" y="1053.600" width="6.500" height="4.800" fill="#f0f0f0"/><path d="M1837.600 1054.500v3" stroke="#f0f0f0" stroke-width="1.400"/><path d="M1824 1050v2.300M1826.400 1050v2.300M1822.800 1052.300h4.800v2c0 1.200-1 2.200-2.400 2.200s-2.400-1-2.400-2.200zM1825.200 1056.500v3.600h2" stroke="#f0f0f0" stroke-width="1" fill="#1f1f1f"/>
</svg>
</body>
</html>
